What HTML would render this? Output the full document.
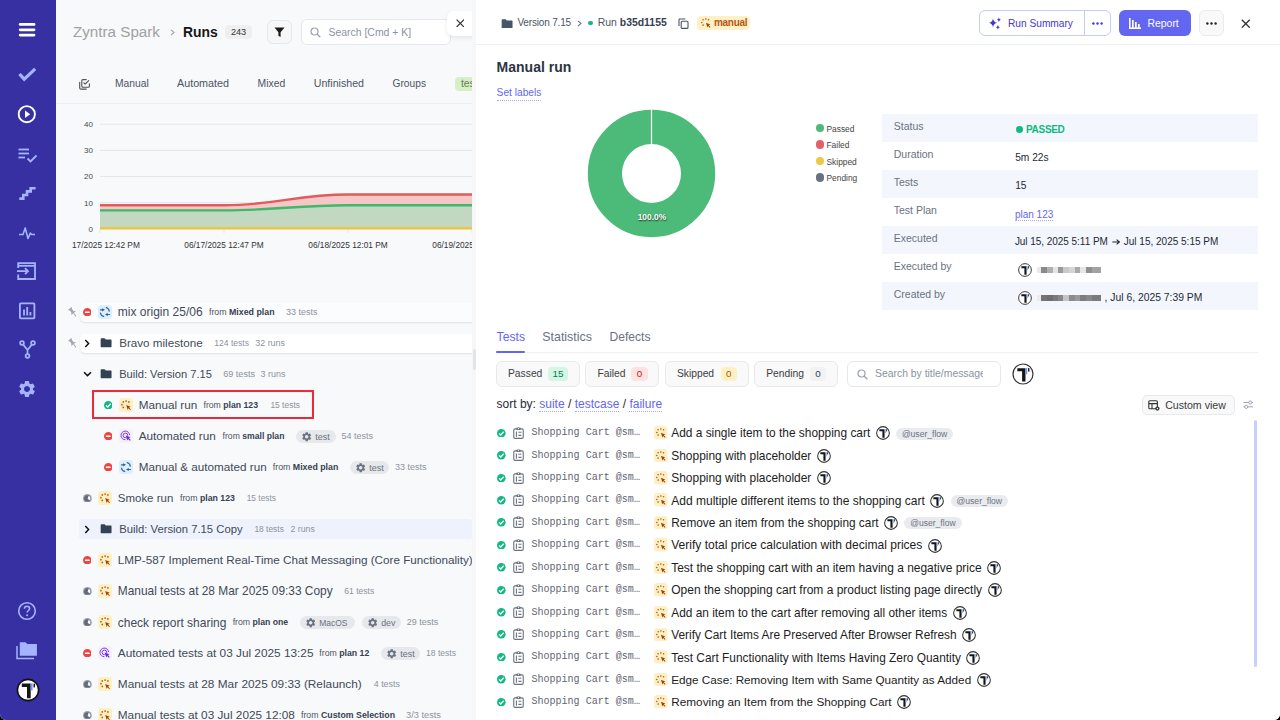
<!DOCTYPE html>
<html><head><meta charset="utf-8">
<style>
*{box-sizing:border-box;margin:0;padding:0}
html,body{width:1280px;height:720px;overflow:hidden;background:#000}
body{font-family:"Liberation Sans",sans-serif;position:relative}
.app{position:absolute;left:0;top:0;width:1280px;height:720px;border-radius:0 0 6px 6px;overflow:hidden;background:#f8f9fb}
.abs{position:absolute}
.sb{position:absolute;left:0;top:0;width:56px;height:720px;background:#3730a3}
.sb svg{position:absolute}
.left{position:absolute;left:56px;top:0;width:416px;height:720px;background:#f8f9fb;overflow:hidden}
.right{position:absolute;left:476px;top:0;width:804px;height:720px;background:#fff}
.strip{position:absolute;left:472px;top:0;width:4px;height:720px;background:#f7f7f8}
.t{position:absolute;white-space:nowrap;line-height:1}
.t b{font-weight:700}
.lk{color:#6366f1;border-bottom:1px dotted #a5a8f5}
.ttl .av{display:inline-block;width:14px;height:14px;margin-left:5.4px;vertical-align:-3px}
.tag{display:inline-block;margin-left:6px;height:12.5px;line-height:12.5px;padding:0 5px;border-radius:6px;background:#eceef2;color:#6b7280;font-size:8.6px;vertical-align:0px}
</style></head><body><div class="app">
<!-- SIDEBAR -->
<div class="sb">
  <svg style="left:18px;top:22px" width="18" height="16" viewBox="0 0 18 16"><g stroke="#fff" stroke-width="2.8" stroke-linecap="round"><line x1="2.2" y1="2.4" x2="16" y2="2.4"/><line x1="2.2" y1="7.8" x2="16" y2="7.8"/><line x1="2.2" y1="13.1" x2="16" y2="13.1"/></g></svg>
  <svg style="left:18px;top:67px" width="18" height="17" viewBox="0 0 18 17"><path d="M2.5 8.2 L6.2 12.2 L16 3" fill="none" stroke="#a5b4fc" stroke-width="3.2" stroke-linecap="square"/></svg>
  <svg style="left:17px;top:104px" width="20" height="20" viewBox="0 0 20 20"><circle cx="9.8" cy="10.2" r="8.1" fill="none" stroke="#fff" stroke-width="1.9"/><path d="M8 6.6 L13.2 10.2 L8 13.9Z" fill="#fff"/></svg>
  <svg style="left:17px;top:147px" width="21" height="17" viewBox="0 0 21 17"><g stroke="#a5b4fc" stroke-width="1.8" fill="none"><line x1="1.5" y1="2.5" x2="12" y2="2.5"/><line x1="1.5" y1="6.5" x2="12" y2="6.5"/><line x1="1.5" y1="10.5" x2="8" y2="10.5"/><path d="M10.5 11.5 L13.5 14.5 L19.5 8.5"/></g></svg>
  <svg style="left:18px;top:186px" width="19" height="15" viewBox="0 0 19 15"><path d="M1.3 12.6 H5.3 V9 H9 V5.4 H12.7 V2.2 H17.6" fill="none" stroke="#a5b4fc" stroke-width="2.6" stroke-linejoin="miter"/></svg>
  <svg style="left:18px;top:226px" width="18" height="14" viewBox="0 0 18 14"><path d="M1 8.5 H5 L7.2 2 L10 12.5 L12.3 7 L13.5 8.5 H17" fill="none" stroke="#a5b4fc" stroke-width="1.6" stroke-linejoin="round"/></svg>
  <svg style="left:16px;top:261px" width="21" height="20" viewBox="0 0 21 20"><g fill="none" stroke="#a5b4fc" stroke-width="1.8"><path d="M2.2 7 V2.2 H19 V18 H2.2 V13.5"/><line x1="2.2" y1="4.8" x2="19" y2="4.8"/><path d="M1 10.2 H12 M9 7.2 L12 10.2 L9 13.2"/></g></svg>
  <svg style="left:18px;top:301px" width="18" height="19" viewBox="0 0 18 19"><g fill="none" stroke="#a5b4fc" stroke-width="1.8"><rect x="1.9" y="2.3" width="14.5" height="15" rx="0.8"/></g><g stroke="#a5b4fc" stroke-width="1.8"><line x1="6" y1="8.5" x2="6" y2="14.5"/><line x1="9.2" y1="6" x2="9.2" y2="14.5"/><line x1="12.4" y1="11" x2="12.4" y2="14.5"/></g></svg>
  <svg style="left:19px;top:340px" width="17" height="19" viewBox="0 0 17 19"><g fill="none" stroke="#a5b4fc" stroke-width="1.7"><circle cx="3" cy="3" r="1.9"/><circle cx="14" cy="3" r="1.9"/><circle cx="8.5" cy="16" r="1.9"/><path d="M4.2 4.6 L8.5 10 L12.8 4.6 M8.5 10 V14"/></g></svg>
  <svg style="left:17px;top:379px" width="20" height="20" viewBox="0 0 24 24"><path fill="#a5b4fc" d="M19.14 12.94c.04-.3.06-.61.06-.94 0-.32-.02-.64-.07-.94l2.03-1.58a.49.49 0 0 0 .12-.61l-1.92-3.32a.488.488 0 0 0-.59-.22l-2.39.96c-.5-.38-1.03-.7-1.62-.94l-.36-2.54a.484.484 0 0 0-.48-.41h-3.84c-.24 0-.43.17-.47.41l-.36 2.54c-.59.24-1.13.57-1.62.94l-2.39-.96c-.22-.08-.47 0-.59.22L2.74 8.87c-.12.21-.08.47.12.61l2.03 1.58c-.05.3-.09.63-.09.94s.02.64.07.94l-2.03 1.58a.49.49 0 0 0-.12.61l1.92 3.32c.12.22.37.29.59.22l2.39-.96c.5.38 1.03.7 1.62.94l.36 2.54c.05.24.24.41.48.41h3.84c.24 0 .44-.17.47-.41l.36-2.54c.59-.24 1.13-.56 1.62-.94l2.39.96c.22.08.47 0 .59-.22l1.92-3.32c.12-.22.07-.47-.12-.61l-2.01-1.58zM12 15.6c-1.98 0-3.6-1.62-3.6-3.6s1.62-3.6 3.6-3.6 3.6 1.62 3.6 3.6-1.62 3.6-3.6 3.6z"/></svg>
  <svg style="left:17px;top:601px" width="20" height="20" viewBox="0 0 20 20"><circle cx="10" cy="10" r="8.3" fill="none" stroke="#a5b4fc" stroke-width="1.6"/><path d="M7.4 7.8 C7.4 6.1 8.6 5.2 10 5.2 C11.5 5.2 12.6 6.2 12.6 7.6 C12.6 9.4 10.2 9.6 10.2 11.6" fill="none" stroke="#a5b4fc" stroke-width="1.6"/><circle cx="10.1" cy="14.3" r="1" fill="#a5b4fc"/></svg>
  <svg style="left:15px;top:640px" width="24" height="21" viewBox="0 0 24 21"><path d="M2 6 V18.5 H19" fill="none" stroke="#a5b4fc" stroke-width="1.5"/><path d="M4.8 2.2 H10.5 L12.3 4 H21.9 V15.8 H4.8Z" fill="#a5b4fc"/></svg>
  <svg style="left:16px;top:678px" width="24" height="24" viewBox="0 0 24 24"><circle cx="12" cy="12" r="10.6" fill="#fff" stroke="#111" stroke-width="1.6"/><path d="M5.8 5.6 H14.7 V20.2 H11 V8.9 H5.8Z" fill="#161616"/><rect x="17.5" y="5.6" width="1.5" height="3.8" fill="#161616"/><rect x="14.7" y="5.4" width="1.9" height="7" fill="#6d9cf0"/></svg>
</div>


<div class="left">
<div class="t" style="left:17.00px;top:24px;font-size:15.2px;color:#a1a1a1;font-weight:400;font-family:'Liberation Sans';">Zyntra Spark</div>
<svg class="abs" style="left:114.00px;top:28.50px;" width="5" height="7" viewBox="0 0 5 7"><path d="M1 0.8 L4 3.5 L1 6.2" fill="none" stroke="#9ca3af" stroke-width="1.1"/></svg>
<div class="t" style="left:127.00px;top:26px;font-size:13.9px;color:#161616;font-weight:700;font-family:'Liberation Sans';">Runs</div>
<div class="abs" style="left:169.00px;top:25.00px;width:27.00px;height:13.50px;background:#efefef;border-radius:4px"></div>
<div class="t" style="left:174.90px;top:28px;font-size:9.17px;color:#333;font-weight:400;font-family:'Liberation Sans';">243</div>
<div class="abs" style="left:210.50px;top:19.50px;width:25.00px;height:24.50px;background:#f7f7f8;border:1px solid #e6e7ea;border-radius:6px"></div>
<svg class="abs" style="left:217.50px;top:26.50px;" width="11" height="11" viewBox="0 0 11 11"><path d="M0.5 0.6 H10.5 L6.6 5.2 V10 L4.4 8.7 V5.2 Z" fill="#1c1c1c"/></svg>
<div class="abs" style="left:244.50px;top:19.00px;width:150.00px;height:25.50px;background:#fff;border:1px solid #e6e7ea;border-radius:6px"></div>
<svg class="abs" style="left:254.00px;top:26.50px;" width="11" height="11" viewBox="0 0 11 11"><circle cx="4.5" cy="4.5" r="3.5" fill="none" stroke="#9ca3af" stroke-width="1.2"/><path d="M7 7 L10.3 10.3" stroke="#9ca3af" stroke-width="1.3"/></svg>
<div class="t" style="left:272.50px;top:28px;font-size:10.45px;color:#8b93a0;font-weight:400;font-family:'Liberation Sans';">Search [Cmd + K]</div>
<svg class="abs" style="left:22.50px;top:78.50px;" width="11" height="11" viewBox="0 0 11 11"><g fill="none" stroke="#505257" stroke-width="1.1" stroke-linecap="round" stroke-linejoin="round"><path d="M7.2 0.6 H3.8 Q2.8 0.6 2.8 1.6 V7.2 Q2.8 8.2 3.8 8.2 H9.4 Q10.4 8.2 10.4 7.2 V4.8"/><path d="M4.8 3.8 L6.2 5 L9.7 1.7"/><path d="M0.7 3.2 V9 Q0.7 10.1 1.8 10.1 H7.3"/></g></svg>
<div class="t" style="left:59.00px;top:79px;font-size:10.3px;color:#4b5563;font-weight:400;font-family:'Liberation Sans';">Manual</div>
<div class="t" style="left:121.00px;top:78px;font-size:10.75px;color:#4b5563;font-weight:400;font-family:'Liberation Sans';">Automated</div>
<div class="t" style="left:201.50px;top:79px;font-size:10.4px;color:#4b5563;font-weight:400;font-family:'Liberation Sans';">Mixed</div>
<div class="t" style="left:257.80px;top:78px;font-size:10.62px;color:#4b5563;font-weight:400;font-family:'Liberation Sans';">Unfinished</div>
<div class="t" style="left:336.50px;top:79px;font-size:10.22px;color:#4b5563;font-weight:400;font-family:'Liberation Sans';">Groups</div>
<div class="abs" style="left:398.70px;top:76.60px;width:35.30px;height:14.40px;background:#d8efc4;border-radius:4px"></div>
<div class="t" style="left:405.00px;top:79px;font-size:10.3px;color:#6b7a5f;font-weight:400;font-family:'Liberation Sans';">test</div>
<div class="abs" style="left:0.00px;top:103.00px;width:416.00px;height:1.00px;background:#eceef1"></div>
<svg class="abs" style="left:0;top:0" width="420" height="260" viewBox="56 0 420 260"><line x1="100" y1="124.2" x2="480" y2="124.2" stroke="#e3e5e8" stroke-width="1"/><line x1="100" y1="150.4" x2="480" y2="150.4" stroke="#e3e5e8" stroke-width="1"/><line x1="100" y1="176.5" x2="480" y2="176.5" stroke="#e3e5e8" stroke-width="1"/><line x1="100" y1="202.6" x2="480" y2="202.6" stroke="#e3e5e8" stroke-width="1"/><line x1="100" y1="228.7" x2="480" y2="228.7" stroke="#e3e5e8" stroke-width="1"/><line x1="100" y1="228.7" x2="100" y2="233" stroke="#e3e5e8" stroke-width="1"/><line x1="224" y1="228.7" x2="224" y2="233" stroke="#e3e5e8" stroke-width="1"/><line x1="348" y1="228.7" x2="348" y2="233" stroke="#e3e5e8" stroke-width="1"/><line x1="472" y1="228.7" x2="472" y2="233" stroke="#e3e5e8" stroke-width="1"/><path d="M100 205.32 L224 205.32 C274 205.32 298 194.48 348 194.48 L480 194.48 L480 204.93 L348 205.19 C298 205.19 274 210.41 224 210.41 L100 210.41 Z" fill="#f5c7c7"/><path d="M100 210.41 L224 210.41 C274 210.41 298 205.19 348 205.19 L480 205.19 L480 228.7 L100 228.7 Z" fill="#c3d8c0"/><path d="M100 205.32 L224 205.32 C274 205.32 298 194.48 348 194.48 L480 194.48" fill="none" stroke="#e05c5c" stroke-width="2.4"/><path d="M100 210.41 L224 210.41 C274 210.41 298 205.19 348 205.19 L480 205.19" fill="none" stroke="#3fb86a" stroke-width="2.4"/><line x1="100" y1="228.3" x2="480" y2="228.3" stroke="#ecc542" stroke-width="2.4"/></svg>
<div class="t" style="left:28.10px;top:121px;font-size:8px;color:#4a4a4a;font-weight:400;font-family:'Liberation Sans';">40</div>
<div class="t" style="left:28.10px;top:147px;font-size:8px;color:#4a4a4a;font-weight:400;font-family:'Liberation Sans';">30</div>
<div class="t" style="left:28.10px;top:173px;font-size:8px;color:#4a4a4a;font-weight:400;font-family:'Liberation Sans';">20</div>
<div class="t" style="left:28.10px;top:200px;font-size:8px;color:#4a4a4a;font-weight:400;font-family:'Liberation Sans';">10</div>
<div class="t" style="left:32.55px;top:226px;font-size:8px;color:#4a4a4a;font-weight:400;font-family:'Liberation Sans';">0</div>
<div class="t" style="left:-50.099999999999994px;width:200px;text-align:center;top:241px;font-size:8.3px;color:#333">17/2025 12:42 PM</div>
<div class="t" style="left:68px;width:200px;text-align:center;top:241px;font-size:8.3px;color:#333">06/17/2025 12:47 PM</div>
<div class="t" style="left:192px;width:200px;text-align:center;top:241px;font-size:8.3px;color:#333">06/18/2025 12:01 PM</div>
<div class="t" style="left:316px;width:200px;text-align:center;top:241px;font-size:8.3px;color:#333">06/19/2025 12:01 PM</div>
<div class="abs" style="left:24.00px;top:302.50px;width:420.00px;height:19.50px;background:#fbfcfd;border-radius:5px;box-shadow:0 1px 2px rgba(0,0,0,0.10)"></div>
<div class="abs" style="left:24.00px;top:333.50px;width:420.00px;height:19.50px;background:#fff;border-radius:5px;box-shadow:0 1px 2px rgba(0,0,0,0.10)"></div>
<svg class="abs" style="left:12.30px;top:306.80px;" width="10" height="11" viewBox="0 0 10 11"><g transform="rotate(-38 5 5.5)" fill="#a0a7b1"><rect x="2.9" y="0.3" width="4.2" height="1.3" rx="0.4"/><rect x="3.7" y="1.4" width="2.6" height="3.6"/><path d="M1.9 6.4 L3.6 4.8 H6.4 L8.1 6.4 Z"/><rect x="4.55" y="6.3" width="0.9" height="4.2"/></g></svg>
<svg class="abs" style="left:12.30px;top:337.80px;" width="10" height="11" viewBox="0 0 10 11"><g transform="rotate(-38 5 5.5)" fill="#a0a7b1"><rect x="2.9" y="0.3" width="4.2" height="1.3" rx="0.4"/><rect x="3.7" y="1.4" width="2.6" height="3.6"/><path d="M1.9 6.4 L3.6 4.8 H6.4 L8.1 6.4 Z"/><rect x="4.55" y="6.3" width="0.9" height="4.2"/></g></svg>
<svg class="abs" style="left:26.90px;top:307.70px;" width="8.6" height="8.6" viewBox="0 0 8.6 8.6"><circle cx="4.3" cy="4.3" r="4.3" fill="#ef4444"/><rect x="1.9" y="3.55" width="4.8" height="1.5" rx="0.5" fill="#fff"/></svg><svg class="abs" style="left:42.20px;top:305.00px;" width="14" height="14" viewBox="0 0 14 14"><rect width="14" height="14" rx="3.2" fill="#e1eefa"/><g fill="none" stroke="#2a6fae" stroke-width="1.15"><path d="M7.8 2.4 A4.9 4.9 0 0 1 11.4 6.6"/><path d="M6.2 11.6 A4.9 4.9 0 0 1 2.3 7.6"/><path d="M1.9 4.8 H5 M12 9.5 H9"/></g><g fill="#1f64a3"><path d="M7 4.8 L4.1 3.2 L4.1 6.4 Z"/><path d="M6.9 9.5 L9.8 7.9 L9.8 11.1 Z"/></g></svg><div class="t" style="left:61.80px;top:306px;font-size:12.03px;color:#414a58;font-weight:400;font-family:'Liberation Sans';">mix origin 25/06</div><div class="t" style="left:153.00px;top:308px;font-size:8.8px;color:#4b5563;font-weight:400;font-family:'Liberation Sans';">from <b style="color:#374151">Mixed plan</b></div><div class="t" style="left:230.00px;top:308px;font-size:9.02px;color:#8d939d;font-weight:400;font-family:'Liberation Sans';">33 tests</div>
<svg class="abs" style="left:27.80px;top:338.50px;" width="6" height="9" viewBox="0 0 6 9"><path d="M1.3 1 L4.6 4.5 L1.3 8" fill="none" stroke="#111" stroke-width="1.5"/></svg><svg class="abs" style="left:44.30px;top:338.20px;" width="12" height="9.5" viewBox="0 0 12 9.6"><path d="M0.6 1.2 Q0.6 0.3 1.5 0.3 H4.6 L5.8 1.6 H11 Q11.6 1.6 11.6 2.3 V8.6 Q11.6 9.3 11 9.3 H1.2 Q0.6 9.3 0.6 8.6 Z" fill="#334155"/></svg><div class="t" style="left:63.20px;top:337px;font-size:11.65px;color:#414a58;font-weight:400;font-family:'Liberation Sans';">Bravo milestone</div><div class="t" style="left:158.30px;top:339px;font-size:8.55px;color:#8d939d;font-weight:400;font-family:'Liberation Sans';">124 tests</div><div class="t" style="left:199.30px;top:339px;font-size:8.9px;color:#8d939d;font-weight:400;font-family:'Liberation Sans';">32 runs</div>
<svg class="abs" style="left:26.50px;top:371.20px;" width="9" height="6" viewBox="0 0 9 6"><path d="M1 1.3 L4.5 4.6 L8 1.3" fill="none" stroke="#111" stroke-width="1.5"/></svg><svg class="abs" style="left:44.30px;top:369.20px;" width="12" height="9.5" viewBox="0 0 12 9.6"><path d="M0.6 1.2 Q0.6 0.3 1.5 0.3 H4.6 L5.8 1.6 H11 Q11.6 1.6 11.6 2.3 V8.6 Q11.6 9.3 11 9.3 H1.2 Q0.6 9.3 0.6 8.6 Z" fill="#334155"/></svg><div class="t" style="left:63.20px;top:369px;font-size:11.13px;color:#414a58;font-weight:400;font-family:'Liberation Sans';">Build: Version 7.15</div><div class="t" style="left:167.20px;top:370px;font-size:9.08px;color:#8d939d;font-weight:400;font-family:'Liberation Sans';">69 tests</div><div class="t" style="left:204.60px;top:370px;font-size:8.96px;color:#8d939d;font-weight:400;font-family:'Liberation Sans';">3 runs</div>
<div class="abs" style="left:36.20px;top:389.80px;width:221.40px;height:29.20px;border:2.6px solid #ee2a3c;background:#f9fafb"></div>
<div class="abs" style="left:39.00px;top:392.50px;width:216.00px;height:24.00px;background:#f8f9fa;box-shadow:0 0 3px rgba(0,0,0,0.08)"></div>
<svg class="abs" style="left:47.90px;top:400.70px;" width="8.6" height="8.6" viewBox="0 0 8.6 8.6"><circle cx="4.3" cy="4.3" r="4.3" fill="#10b981"/><path d="M2.0 4.3999999999999995 L3.6999999999999997 6.0 L6.699999999999999 2.8" fill="none" stroke="#fff" stroke-width="1.3"/></svg><svg class="abs" style="left:63.00px;top:398.00px;" width="14" height="14" viewBox="0 0 14 14"><rect width="14" height="14" rx="3.2" fill="#fdf0c4"/><g fill="#c2570c"><circle cx="4.3" cy="3.9" r="0.85"/><circle cx="7.1" cy="3.1" r="0.85"/><circle cx="9.9" cy="3.9" r="0.85"/><circle cx="2.9" cy="6.7" r="0.85"/><circle cx="4.3" cy="9.4" r="0.85"/></g><path d="M7.2 7.1 L11.7 8.8 L10.1 9.6 L11.9 11.4 L11.2 12.1 L9.4 10.3 L8.7 11.9 Z" fill="#a8400c"/></svg><div class="t" style="left:82.70px;top:399px;font-size:11.71px;color:#414a58;font-weight:400;font-family:'Liberation Sans';">Manual run</div><div class="t" style="left:147.50px;top:401px;font-size:8.68px;color:#4b5563;font-weight:400;font-family:'Liberation Sans';">from <b style="color:#374151">plan 123</b></div><div class="t" style="left:214.40px;top:401px;font-size:8.45px;color:#8d939d;font-weight:400;font-family:'Liberation Sans';">15 tests</div>
<svg class="abs" style="left:47.90px;top:431.70px;" width="8.6" height="8.6" viewBox="0 0 8.6 8.6"><circle cx="4.3" cy="4.3" r="4.3" fill="#ef4444"/><rect x="1.9" y="3.55" width="4.8" height="1.5" rx="0.5" fill="#fff"/></svg><svg class="abs" style="left:63.00px;top:429.00px;" width="14" height="14" viewBox="0 0 14 14"><rect width="14" height="14" rx="3.2" fill="#f4f0fe"/><g fill="none" stroke="#7c3aed" stroke-width="1"><path d="M10.6 6.2 A4.3 4.3 0 1 0 6.4 10.7"/><path d="M8.7 6.8 A2.3 2.3 0 1 0 6.8 8.7"/></g><path d="M6.6 6.6 L11.6 8.3 L9.9 9.1 L11.7 10.9 L10.9 11.7 L9.1 9.9 L8.3 11.6 Z" fill="#6d28d9"/></svg><div class="t" style="left:82.70px;top:430px;font-size:11.78px;color:#414a58;font-weight:400;font-family:'Liberation Sans';">Automated run</div><div class="t" style="left:166.60px;top:432px;font-size:8.63px;color:#4b5563;font-weight:400;font-family:'Liberation Sans';">from <b style="color:#374151">small plan</b></div><div class="abs" style="left:240.00px;top:430.12px;width:39.50px;height:12.75px;background:#e6e8ec;border-radius:7px"></div><svg class="abs" style="left:245.20px;top:430.80px;" width="11.4" height="11.4" viewBox="0 0 24 24"><path fill="#6b7280" d="M19.14 12.94c.04-.3.06-.61.06-.94 0-.32-.02-.64-.07-.94l2.03-1.58a.49.49 0 0 0 .12-.61l-1.92-3.32a.488.488 0 0 0-.59-.22l-2.39.96c-.5-.38-1.03-.7-1.62-.94l-.36-2.54a.484.484 0 0 0-.48-.41h-3.84c-.24 0-.43.17-.47.41l-.36 2.54c-.59.24-1.13.57-1.62.94l-2.39-.96c-.22-.08-.47 0-.59.22L2.74 8.87c-.12.21-.08.47.12.61l2.03 1.58c-.05.3-.09.63-.09.94s.02.64.07.94l-2.03 1.58a.49.49 0 0 0-.12.61l1.92 3.32c.12.22.37.29.59.22l2.39-.96c.5.38 1.03.7 1.62.94l.36 2.54c.05.24.24.41.48.41h3.84c.24 0 .44-.17.47-.41l.36-2.54c.59-.24 1.13-.56 1.62-.94l2.39.96c.22.08.47 0 .59-.22l1.92-3.32c.12-.22.07-.47-.12-.61l-2.01-1.58zM12 15.6c-1.98 0-3.6-1.62-3.6-3.6s1.62-3.6 3.6-3.6 3.6 1.62 3.6 3.6-1.62 3.6-3.6 3.6z"/></svg><div class="t" style="left:259.20px;top:433px;font-size:9.0px;color:#6b7280;font-weight:400;font-family:'Liberation Sans';">test</div><div class="t" style="left:285.60px;top:432px;font-size:8.97px;color:#8d939d;font-weight:400;font-family:'Liberation Sans';">54 tests</div>
<svg class="abs" style="left:47.90px;top:462.70px;" width="8.6" height="8.6" viewBox="0 0 8.6 8.6"><circle cx="4.3" cy="4.3" r="4.3" fill="#ef4444"/><rect x="1.9" y="3.55" width="4.8" height="1.5" rx="0.5" fill="#fff"/></svg><svg class="abs" style="left:63.00px;top:460.00px;" width="14" height="14" viewBox="0 0 14 14"><rect width="14" height="14" rx="3.2" fill="#e1eefa"/><g fill="none" stroke="#2a6fae" stroke-width="1.15"><path d="M7.8 2.4 A4.9 4.9 0 0 1 11.4 6.6"/><path d="M6.2 11.6 A4.9 4.9 0 0 1 2.3 7.6"/><path d="M1.9 4.8 H5 M12 9.5 H9"/></g><g fill="#1f64a3"><path d="M7 4.8 L4.1 3.2 L4.1 6.4 Z"/><path d="M6.9 9.5 L9.8 7.9 L9.8 11.1 Z"/></g></svg><div class="t" style="left:82.70px;top:461px;font-size:11.69px;color:#414a58;font-weight:400;font-family:'Liberation Sans';">Manual &amp; automated run</div><div class="t" style="left:216.80px;top:463px;font-size:8.8px;color:#4b5563;font-weight:400;font-family:'Liberation Sans';">from <b style="color:#374151">Mixed plan</b></div><div class="abs" style="left:294.00px;top:461.12px;width:38.50px;height:12.75px;background:#e6e8ec;border-radius:7px"></div><svg class="abs" style="left:299.20px;top:461.80px;" width="11.4" height="11.4" viewBox="0 0 24 24"><path fill="#6b7280" d="M19.14 12.94c.04-.3.06-.61.06-.94 0-.32-.02-.64-.07-.94l2.03-1.58a.49.49 0 0 0 .12-.61l-1.92-3.32a.488.488 0 0 0-.59-.22l-2.39.96c-.5-.38-1.03-.7-1.62-.94l-.36-2.54a.484.484 0 0 0-.48-.41h-3.84c-.24 0-.43.17-.47.41l-.36 2.54c-.59.24-1.13.57-1.62.94l-2.39-.96c-.22-.08-.47 0-.59.22L2.74 8.87c-.12.21-.08.47.12.61l2.03 1.58c-.05.3-.09.63-.09.94s.02.64.07.94l-2.03 1.58a.49.49 0 0 0-.12.61l1.92 3.32c.12.22.37.29.59.22l2.39-.96c.5.38 1.03.7 1.62.94l.36 2.54c.05.24.24.41.48.41h3.84c.24 0 .44-.17.47-.41l.36-2.54c.59-.24 1.13-.56 1.62-.94l2.39.96c.22.08.47 0 .59-.22l1.92-3.32c.12-.22.07-.47-.12-.61l-2.01-1.58zM12 15.6c-1.98 0-3.6-1.62-3.6-3.6s1.62-3.6 3.6-3.6 3.6 1.62 3.6 3.6-1.62 3.6-3.6 3.6z"/></svg><div class="t" style="left:313.20px;top:464px;font-size:9.0px;color:#6b7280;font-weight:400;font-family:'Liberation Sans';">test</div><div class="t" style="left:339.00px;top:463px;font-size:9.02px;color:#8d939d;font-weight:400;font-family:'Liberation Sans';">33 tests</div>
<svg class="abs" style="left:26.80px;top:493.60px;" width="8.8" height="8.8" viewBox="0 0 8.8 8.8"><circle cx="4.4" cy="4.4" r="4.4" fill="#9aa0a9"/><circle cx="4.4" cy="4.4" r="3.2" fill="#646b78"/><path d="M4.6000000000000005 4.800000000000001 L5.67 1.68 A3 3 0 0 1 6.70 6.33 Z" fill="#fff"/></svg><svg class="abs" style="left:42.20px;top:491.00px;" width="14" height="14" viewBox="0 0 14 14"><rect width="14" height="14" rx="3.2" fill="#fdf0c4"/><g fill="#c2570c"><circle cx="4.3" cy="3.9" r="0.85"/><circle cx="7.1" cy="3.1" r="0.85"/><circle cx="9.9" cy="3.9" r="0.85"/><circle cx="2.9" cy="6.7" r="0.85"/><circle cx="4.3" cy="9.4" r="0.85"/></g><path d="M7.2 7.1 L11.7 8.8 L10.1 9.6 L11.9 11.4 L11.2 12.1 L9.4 10.3 L8.7 11.9 Z" fill="#a8400c"/></svg><div class="t" style="left:61.80px;top:493px;font-size:11.48px;color:#414a58;font-weight:400;font-family:'Liberation Sans';">Smoke run</div><div class="t" style="left:124.00px;top:494px;font-size:8.76px;color:#4b5563;font-weight:400;font-family:'Liberation Sans';">from <b style="color:#374151">plan 123</b></div><div class="t" style="left:190.70px;top:494px;font-size:8.37px;color:#8d939d;font-weight:400;font-family:'Liberation Sans';">15 tests</div>
<div class="abs" style="left:23.30px;top:519.40px;width:392.70px;height:19.20px;background:#eef2fd;border-radius:3px"></div>
<svg class="abs" style="left:27.80px;top:524.50px;" width="6" height="9" viewBox="0 0 6 9"><path d="M1.3 1 L4.6 4.5 L1.3 8" fill="none" stroke="#111" stroke-width="1.5"/></svg><svg class="abs" style="left:44.30px;top:524.20px;" width="12" height="9.5" viewBox="0 0 12 9.6"><path d="M0.6 1.2 Q0.6 0.3 1.5 0.3 H4.6 L5.8 1.6 H11 Q11.6 1.6 11.6 2.3 V8.6 Q11.6 9.3 11 9.3 H1.2 Q0.6 9.3 0.6 8.6 Z" fill="#334155"/></svg><div class="t" style="left:63.20px;top:524px;font-size:11.28px;color:#414a58;font-weight:400;font-family:'Liberation Sans';">Build: Version 7.15 Copy</div><div class="t" style="left:198.40px;top:525px;font-size:8.42px;color:#8d939d;font-weight:400;font-family:'Liberation Sans';">18 tests</div><div class="t" style="left:234.60px;top:525px;font-size:8.71px;color:#8d939d;font-weight:400;font-family:'Liberation Sans';">2 runs</div>
<svg class="abs" style="left:26.90px;top:555.70px;" width="8.6" height="8.6" viewBox="0 0 8.6 8.6"><circle cx="4.3" cy="4.3" r="4.3" fill="#ef4444"/><rect x="1.9" y="3.55" width="4.8" height="1.5" rx="0.5" fill="#fff"/></svg><svg class="abs" style="left:42.20px;top:553.00px;" width="14" height="14" viewBox="0 0 14 14"><rect width="14" height="14" rx="3.2" fill="#fdf0c4"/><g fill="#c2570c"><circle cx="4.3" cy="3.9" r="0.85"/><circle cx="7.1" cy="3.1" r="0.85"/><circle cx="9.9" cy="3.9" r="0.85"/><circle cx="2.9" cy="6.7" r="0.85"/><circle cx="4.3" cy="9.4" r="0.85"/></g><path d="M7.2 7.1 L11.7 8.8 L10.1 9.6 L11.9 11.4 L11.2 12.1 L9.4 10.3 L8.7 11.9 Z" fill="#a8400c"/></svg><div class="t" style="left:61.80px;top:554px;font-size:11.7px;color:#414a58;font-weight:400;font-family:'Liberation Sans';">LMP-587 Implement Real-Time Chat Messaging (Core Functionality)</div>
<svg class="abs" style="left:26.80px;top:586.60px;" width="8.8" height="8.8" viewBox="0 0 8.8 8.8"><circle cx="4.4" cy="4.4" r="4.4" fill="#9aa0a9"/><circle cx="4.4" cy="4.4" r="3.2" fill="#646b78"/><path d="M4.6000000000000005 4.800000000000001 L5.67 1.68 A3 3 0 0 1 6.70 6.33 Z" fill="#fff"/></svg><svg class="abs" style="left:42.20px;top:584.00px;" width="14" height="14" viewBox="0 0 14 14"><rect width="14" height="14" rx="3.2" fill="#fdf0c4"/><g fill="#c2570c"><circle cx="4.3" cy="3.9" r="0.85"/><circle cx="7.1" cy="3.1" r="0.85"/><circle cx="9.9" cy="3.9" r="0.85"/><circle cx="2.9" cy="6.7" r="0.85"/><circle cx="4.3" cy="9.4" r="0.85"/></g><path d="M7.2 7.1 L11.7 8.8 L10.1 9.6 L11.9 11.4 L11.2 12.1 L9.4 10.3 L8.7 11.9 Z" fill="#a8400c"/></svg><div class="t" style="left:61.80px;top:586px;font-size:11.9px;color:#414a58;font-weight:400;font-family:'Liberation Sans';">Manual tests at 28 Mar 2025 09:33 Copy</div><div class="t" style="left:288.30px;top:587px;font-size:8.57px;color:#8d939d;font-weight:400;font-family:'Liberation Sans';">61 tests</div>
<svg class="abs" style="left:26.80px;top:617.60px;" width="8.8" height="8.8" viewBox="0 0 8.8 8.8"><circle cx="4.4" cy="4.4" r="4.4" fill="#9aa0a9"/><circle cx="4.4" cy="4.4" r="3.2" fill="#646b78"/><path d="M4.6000000000000005 4.800000000000001 L5.67 1.68 A3 3 0 0 1 6.70 6.33 Z" fill="#fff"/></svg><svg class="abs" style="left:42.20px;top:615.00px;" width="14" height="14" viewBox="0 0 14 14"><rect width="14" height="14" rx="3.2" fill="#fdf0c4"/><g fill="#c2570c"><circle cx="4.3" cy="3.9" r="0.85"/><circle cx="7.1" cy="3.1" r="0.85"/><circle cx="9.9" cy="3.9" r="0.85"/><circle cx="2.9" cy="6.7" r="0.85"/><circle cx="4.3" cy="9.4" r="0.85"/></g><path d="M7.2 7.1 L11.7 8.8 L10.1 9.6 L11.9 11.4 L11.2 12.1 L9.4 10.3 L8.7 11.9 Z" fill="#a8400c"/></svg><div class="t" style="left:61.80px;top:617px;font-size:11.99px;color:#414a58;font-weight:400;font-family:'Liberation Sans';">check report sharing</div><div class="t" style="left:176.70px;top:618px;font-size:8.7px;color:#4b5563;font-weight:400;font-family:'Liberation Sans';">from <b style="color:#374151">plan one</b></div><div class="abs" style="left:244.00px;top:616.12px;width:55.30px;height:12.75px;background:#e6e8ec;border-radius:7px"></div><svg class="abs" style="left:249.20px;top:616.80px;" width="11.4" height="11.4" viewBox="0 0 24 24"><path fill="#6b7280" d="M19.14 12.94c.04-.3.06-.61.06-.94 0-.32-.02-.64-.07-.94l2.03-1.58a.49.49 0 0 0 .12-.61l-1.92-3.32a.488.488 0 0 0-.59-.22l-2.39.96c-.5-.38-1.03-.7-1.62-.94l-.36-2.54a.484.484 0 0 0-.48-.41h-3.84c-.24 0-.43.17-.47.41l-.36 2.54c-.59.24-1.13.57-1.62.94l-2.39-.96c-.22-.08-.47 0-.59.22L2.74 8.87c-.12.21-.08.47.12.61l2.03 1.58c-.05.3-.09.63-.09.94s.02.64.07.94l-2.03 1.58a.49.49 0 0 0-.12.61l1.92 3.32c.12.22.37.29.59.22l2.39-.96c.5.38 1.03.7 1.62.94l.36 2.54c.05.24.24.41.48.41h3.84c.24 0 .44-.17.47-.41l.36-2.54c.59-.24 1.13-.56 1.62-.94l2.39.96c.22.08.47 0 .59-.22l1.92-3.32c.12-.22.07-.47-.12-.61l-2.01-1.58zM12 15.6c-1.98 0-3.6-1.62-3.6-3.6s1.62-3.6 3.6-3.6 3.6 1.62 3.6 3.6-1.62 3.6-3.6 3.6z"/></svg><div class="t" style="left:263.20px;top:619px;font-size:8.5px;color:#6b7280;font-weight:400;font-family:'Liberation Sans';">MacOS</div><div class="abs" style="left:306.00px;top:616.12px;width:39.00px;height:12.75px;background:#e6e8ec;border-radius:7px"></div><svg class="abs" style="left:311.20px;top:616.80px;" width="11.4" height="11.4" viewBox="0 0 24 24"><path fill="#6b7280" d="M19.14 12.94c.04-.3.06-.61.06-.94 0-.32-.02-.64-.07-.94l2.03-1.58a.49.49 0 0 0 .12-.61l-1.92-3.32a.488.488 0 0 0-.59-.22l-2.39.96c-.5-.38-1.03-.7-1.62-.94l-.36-2.54a.484.484 0 0 0-.48-.41h-3.84c-.24 0-.43.17-.47.41l-.36 2.54c-.59.24-1.13.57-1.62.94l-2.39-.96c-.22-.08-.47 0-.59.22L2.74 8.87c-.12.21-.08.47.12.61l2.03 1.58c-.05.3-.09.63-.09.94s.02.64.07.94l-2.03 1.58a.49.49 0 0 0-.12.61l1.92 3.32c.12.22.37.29.59.22l2.39-.96c.5.38 1.03.7 1.62.94l.36 2.54c.05.24.24.41.48.41h3.84c.24 0 .44-.17.47-.41l.36-2.54c.59-.24 1.13-.56 1.62-.94l2.39.96c.22.08.47 0 .59-.22l1.92-3.32c.12-.22.07-.47-.12-.61l-2.01-1.58zM12 15.6c-1.98 0-3.6-1.62-3.6-3.6s1.62-3.6 3.6-3.6 3.6 1.62 3.6 3.6-1.62 3.6-3.6 3.6z"/></svg><div class="t" style="left:325.20px;top:619px;font-size:8.75px;color:#6b7280;font-weight:400;font-family:'Liberation Sans';">dev</div><div class="t" style="left:350.70px;top:618px;font-size:9.02px;color:#8d939d;font-weight:400;font-family:'Liberation Sans';">29 tests</div>
<svg class="abs" style="left:26.90px;top:648.70px;" width="8.6" height="8.6" viewBox="0 0 8.6 8.6"><circle cx="4.3" cy="4.3" r="4.3" fill="#ef4444"/><rect x="1.9" y="3.55" width="4.8" height="1.5" rx="0.5" fill="#fff"/></svg><svg class="abs" style="left:42.20px;top:646.00px;" width="14" height="14" viewBox="0 0 14 14"><rect width="14" height="14" rx="3.2" fill="#f4f0fe"/><g fill="none" stroke="#7c3aed" stroke-width="1"><path d="M10.6 6.2 A4.3 4.3 0 1 0 6.4 10.7"/><path d="M8.7 6.8 A2.3 2.3 0 1 0 6.8 8.7"/></g><path d="M6.6 6.6 L11.6 8.3 L9.9 9.1 L11.7 10.9 L10.9 11.7 L9.1 9.9 L8.3 11.6 Z" fill="#6d28d9"/></svg><div class="t" style="left:61.80px;top:648px;font-size:11.82px;color:#414a58;font-weight:400;font-family:'Liberation Sans';">Automated tests at 03 Jul 2025 13:25</div><div class="t" style="left:263.30px;top:649px;font-size:8.74px;color:#4b5563;font-weight:400;font-family:'Liberation Sans';">from <b style="color:#374151">plan 12</b></div><div class="abs" style="left:325.00px;top:647.12px;width:39.30px;height:12.75px;background:#e6e8ec;border-radius:7px"></div><svg class="abs" style="left:330.20px;top:647.80px;" width="11.4" height="11.4" viewBox="0 0 24 24"><path fill="#6b7280" d="M19.14 12.94c.04-.3.06-.61.06-.94 0-.32-.02-.64-.07-.94l2.03-1.58a.49.49 0 0 0 .12-.61l-1.92-3.32a.488.488 0 0 0-.59-.22l-2.39.96c-.5-.38-1.03-.7-1.62-.94l-.36-2.54a.484.484 0 0 0-.48-.41h-3.84c-.24 0-.43.17-.47.41l-.36 2.54c-.59.24-1.13.57-1.62.94l-2.39-.96c-.22-.08-.47 0-.59.22L2.74 8.87c-.12.21-.08.47.12.61l2.03 1.58c-.05.3-.09.63-.09.94s.02.64.07.94l-2.03 1.58a.49.49 0 0 0-.12.61l1.92 3.32c.12.22.37.29.59.22l2.39-.96c.5.38 1.03.7 1.62.94l.36 2.54c.05.24.24.41.48.41h3.84c.24 0 .44-.17.47-.41l.36-2.54c.59-.24 1.13-.56 1.62-.94l2.39.96c.22.08.47 0 .59-.22l1.92-3.32c.12-.22.07-.47-.12-.61l-2.01-1.58zM12 15.6c-1.98 0-3.6-1.62-3.6-3.6s1.62-3.6 3.6-3.6 3.6 1.62 3.6 3.6-1.62 3.6-3.6 3.6z"/></svg><div class="t" style="left:344.20px;top:650px;font-size:9.0px;color:#6b7280;font-weight:400;font-family:'Liberation Sans';">test</div><div class="t" style="left:370.00px;top:649px;font-size:8.57px;color:#8d939d;font-weight:400;font-family:'Liberation Sans';">18 tests</div>
<svg class="abs" style="left:26.80px;top:679.60px;" width="8.8" height="8.8" viewBox="0 0 8.8 8.8"><circle cx="4.4" cy="4.4" r="4.4" fill="#9aa0a9"/><circle cx="4.4" cy="4.4" r="3.2" fill="#646b78"/><path d="M4.6000000000000005 4.800000000000001 L5.67 1.68 A3 3 0 0 1 6.70 6.33 Z" fill="#fff"/></svg><svg class="abs" style="left:42.20px;top:677.00px;" width="14" height="14" viewBox="0 0 14 14"><rect width="14" height="14" rx="3.2" fill="#fdf0c4"/><g fill="#c2570c"><circle cx="4.3" cy="3.9" r="0.85"/><circle cx="7.1" cy="3.1" r="0.85"/><circle cx="9.9" cy="3.9" r="0.85"/><circle cx="2.9" cy="6.7" r="0.85"/><circle cx="4.3" cy="9.4" r="0.85"/></g><path d="M7.2 7.1 L11.7 8.8 L10.1 9.6 L11.9 11.4 L11.2 12.1 L9.4 10.3 L8.7 11.9 Z" fill="#a8400c"/></svg><div class="t" style="left:61.80px;top:679px;font-size:11.83px;color:#414a58;font-weight:400;font-family:'Liberation Sans';">Manual tests at 28 Mar 2025 09:33 (Relaunch)</div><div class="t" style="left:317.70px;top:680px;font-size:8.93px;color:#8d939d;font-weight:400;font-family:'Liberation Sans';">4 tests</div>
<svg class="abs" style="left:26.80px;top:710.60px;" width="8.8" height="8.8" viewBox="0 0 8.8 8.8"><circle cx="4.4" cy="4.4" r="4.4" fill="#9aa0a9"/><circle cx="4.4" cy="4.4" r="3.2" fill="#646b78"/><path d="M4.6000000000000005 4.800000000000001 L5.67 1.68 A3 3 0 0 1 6.70 6.33 Z" fill="#fff"/></svg><svg class="abs" style="left:42.20px;top:708.00px;" width="14" height="14" viewBox="0 0 14 14"><rect width="14" height="14" rx="3.2" fill="#fdf0c4"/><g fill="#c2570c"><circle cx="4.3" cy="3.9" r="0.85"/><circle cx="7.1" cy="3.1" r="0.85"/><circle cx="9.9" cy="3.9" r="0.85"/><circle cx="2.9" cy="6.7" r="0.85"/><circle cx="4.3" cy="9.4" r="0.85"/></g><path d="M7.2 7.1 L11.7 8.8 L10.1 9.6 L11.9 11.4 L11.2 12.1 L9.4 10.3 L8.7 11.9 Z" fill="#a8400c"/></svg><div class="t" style="left:61.80px;top:710px;font-size:11.81px;color:#414a58;font-weight:400;font-family:'Liberation Sans';">Manual tests at 03 Jul 2025 12:08</div><div class="t" style="left:245.00px;top:711px;font-size:8.77px;color:#4b5563;font-weight:400;font-family:'Liberation Sans';">from <b style="color:#374151">Custom Selection</b></div><div class="t" style="left:350.00px;top:711px;font-size:9.26px;color:#8d939d;font-weight:400;font-family:'Liberation Sans';">3/3 tests</div>
<div class="abs" style="left:391.30px;top:10.90px;width:32.70px;height:24.70px;background:#fff;border-radius:7px;box-shadow:0 2px 5px rgba(0,0,0,0.08)"></div>
<svg class="abs" style="left:399.80px;top:18.80px;" width="8.6" height="8.6" viewBox="0 0 8.6 8.6"><path d="M0.6 0.6 L8 8 M8 0.6 L0.6 8" stroke="#333" stroke-width="1.2"/></svg>
</div>
<div class="strip"></div>
<div class="abs" style="left:472.8px;top:349px;width:2.9px;height:21.3px;background:#e3e4e8;border-radius:2px"></div>
<div class="right">
<svg class="abs" style="left:25.40px;top:18.80px;" width="12" height="9.5" viewBox="0 0 12 9.6"><path d="M0.6 1.2 Q0.6 0.3 1.5 0.3 H4.6 L5.8 1.6 H11 Q11.6 1.6 11.6 2.3 V8.6 Q11.6 9.3 11 9.3 H1.2 Q0.6 9.3 0.6 8.6 Z" fill="#475569"/></svg>
<div class="t" style="left:41.40px;top:18px;font-size:10px;color:#4b5563;font-weight:400;font-family:'Liberation Sans';letter-spacing:-0.166px;">Version 7.15</div>
<svg class="abs" style="left:100.50px;top:20.00px;" width="5" height="7" viewBox="0 0 5 7"><path d="M1 0.8 L4 3.5 L1 6.2" fill="none" stroke="#6b7280" stroke-width="1.1"/></svg>
<div class="abs" style="left:112.20px;top:20.60px;width:4.80px;height:4.80px;background:#10b981;border-radius:50%"></div>
<div class="t" style="left:121.70px;top:18px;font-size:10.45px;color:#4b5563;font-weight:400;font-family:'Liberation Sans';">Run <b style="color:#374151">b35d1155</b></div>
<svg class="abs" style="left:201.50px;top:17.50px;" width="11" height="11" viewBox="0 0 11 11"><g fill="none" stroke="#4b5563" stroke-width="1.1"><rect x="3.2" y="3.2" width="6.8" height="7.2" rx="1"/><path d="M1 8 V1.8 Q1 1 1.8 1 H7.3"/></g></svg>
<div class="abs" style="left:220.80px;top:16.00px;width:53.60px;height:13.70px;background:#fef1c7;border-radius:4px"></div>
<svg class="abs" style="left:222.50px;top:16.20px;" width="13.5" height="13.5" viewBox="0 0 14 14"><g fill="#c2570c"><circle cx="4.3" cy="3.9" r="0.85"/><circle cx="7.1" cy="3.1" r="0.85"/><circle cx="9.9" cy="3.9" r="0.85"/><circle cx="2.9" cy="6.7" r="0.85"/><circle cx="4.3" cy="9.4" r="0.85"/></g><path d="M7.2 7.1 L11.7 8.8 L10.1 9.6 L11.9 11.4 L11.2 12.1 L9.4 10.3 L8.7 11.9 Z" fill="#a8400c"/></svg>
<div class="t" style="left:238.00px;top:18px;font-size:10px;color:#b8560f;font-weight:700;font-family:'Liberation Sans';letter-spacing:-0.302px;">manual</div>
<div class="abs" style="left:-1.00px;top:44.00px;width:805.00px;height:1.00px;background:#eef0f3"></div>
<div class="abs" style="left:503.40px;top:10.25px;width:131.20px;height:25.35px;border:1px solid #c7cbfa;border-radius:6px;background:#fff"></div>
<div class="abs" style="left:608.00px;top:10.50px;width:1.00px;height:25.00px;background:#c7cbfa"></div>
<svg class="abs" style="left:511.60px;top:15.50px;" width="14" height="14" viewBox="0 0 14 14"><path d="M5 2.4 Q5.6 6.2 9.3 6.8 Q5.6 7.4 5 11.2 Q4.4 7.4 0.7 6.8 Q4.4 6.2 5 2.4Z M10.9 1.4 Q11.15 3.45 12.9 3.7 Q11.15 3.95 10.9 6 Q10.65 3.95 8.9 3.7 Q10.65 3.45 10.9 1.4Z M9.9 9 Q10.15 10.95 11.9 11.2 Q10.15 11.45 9.9 13.4 Q9.65 11.45 7.9 11.2 Q9.65 10.95 9.9 9Z" fill="#4338ca"/></svg>
<div class="t" style="left:532.00px;top:19px;font-size:10.16px;color:#4338ca;font-weight:400;font-family:'Liberation Sans';">Run Summary</div>
<svg class="abs" style="left:616.00px;top:21.50px;" width="11" height="3" viewBox="0 0 11 3"><circle cx="1.4" cy="1.5" r="1.2" fill="#4338ca"/><circle cx="5.5" cy="1.5" r="1.2" fill="#4338ca"/><circle cx="9.6" cy="1.5" r="1.2" fill="#4338ca"/></svg>
<div class="abs" style="left:642.50px;top:10.25px;width:72.10px;height:25.35px;background:#6366f1;border-radius:6px"></div>
<svg class="abs" style="left:652.50px;top:17.50px;" width="12" height="11" viewBox="0 0 12 11"><g fill="#fff"><rect x="0" y="0" width="1.6" height="11"/><rect x="0" y="9.4" width="12" height="1.6"/><rect x="3" y="2" width="1.7" height="8"/><rect x="6" y="4" width="1.7" height="6"/><rect x="9" y="6" width="1.7" height="4"/></g></svg>
<div class="t" style="left:671.50px;top:19px;font-size:10.41px;color:#fff;font-weight:400;font-family:'Liberation Sans';">Report</div>
<div class="abs" style="left:723.00px;top:10.25px;width:24.75px;height:25.35px;background:#f9f9f9;border:1px solid #ebebeb;border-radius:6px"></div>
<svg class="abs" style="left:730.00px;top:21.50px;" width="11" height="3" viewBox="0 0 11 3"><circle cx="1.4" cy="1.5" r="1.2" fill="#222"/><circle cx="5.5" cy="1.5" r="1.2" fill="#222"/><circle cx="9.6" cy="1.5" r="1.2" fill="#222"/></svg>
<svg class="abs" style="left:764.50px;top:18.50px;" width="9.5" height="9.5" viewBox="0 0 9.5 9.5"><path d="M0.8 0.8 L8.7 8.7 M8.7 0.8 L0.8 8.7" stroke="#333" stroke-width="1.3"/></svg>
<div class="t" style="left:20.60px;top:60px;font-size:14px;color:#2b3442;font-weight:700;font-family:'Liberation Sans';">Manual run</div>
<div class="t" style="left:20.60px;top:88px;font-size:10.2px;color:#6366f1;font-weight:400;font-family:'Liberation Sans';border-bottom:1px dotted #a5a8f5;padding-bottom:1px;line-height:1.05">Set labels</div>
<svg class="abs" style="left:111.40px;top:108.50px;" width="129" height="129" viewBox="0 0 129 129"><circle cx="64.5" cy="64.5" r="46.6" fill="none" stroke="#4cba78" stroke-width="34.2"/><line x1="64.5" y1="0" x2="64.5" y2="35" stroke="#fff" stroke-width="1.2"/></svg>
<div class="t" style="left:135.89999999999998px;width:80px;text-align:center;top:212.69px;font-size:8.4px;color:#fff;font-weight:700;text-shadow:0.5px 0.8px 1.5px rgba(0,0,0,0.7)">100.0%</div>
<div class="abs" style="left:339.80px;top:124.05px;width:8.40px;height:8.40px;background:#4cba78;border-radius:50%"></div>
<div class="t" style="left:350.50px;top:125px;font-size:8.4px;color:#444;font-weight:400;font-family:'Liberation Sans';">Passed</div>
<div class="abs" style="left:339.80px;top:140.40px;width:8.40px;height:8.40px;background:#e55f68;border-radius:50%"></div>
<div class="t" style="left:350.50px;top:141px;font-size:8.4px;color:#444;font-weight:400;font-family:'Liberation Sans';">Failed</div>
<div class="abs" style="left:339.80px;top:156.80px;width:8.40px;height:8.40px;background:#ecc848;border-radius:50%"></div>
<div class="t" style="left:350.50px;top:158px;font-size:8.4px;color:#444;font-weight:400;font-family:'Liberation Sans';">Skipped</div>
<div class="abs" style="left:339.80px;top:173.30px;width:8.40px;height:8.40px;background:#6b7080;border-radius:50%"></div>
<div class="t" style="left:350.50px;top:174px;font-size:8.4px;color:#444;font-weight:400;font-family:'Liberation Sans';">Pending</div>
<div class="abs" style="left:406.20px;top:114.00px;width:375.60px;height:28.00px;background:#f3f6fd"></div>
<div class="t" style="left:417.75px;top:121px;font-size:10.5px;color:#6b7280;font-weight:400;font-family:'Liberation Sans';">Status</div>
<div class="abs" style="left:539.80px;top:126.20px;width:7.00px;height:6.80px;background:#10b981;border-radius:50%"></div>
<div class="t" style="left:550.00px;top:125px;font-size:10px;color:#10b981;font-weight:700;font-family:'Liberation Sans';letter-spacing:-0.314px;">PASSED</div>
<div class="t" style="left:417.75px;top:149px;font-size:10.5px;color:#6b7280;font-weight:400;font-family:'Liberation Sans';">Duration</div>
<div class="t" style="left:539.20px;top:153px;font-size:10.2px;color:#1f2937;font-weight:400;font-family:'Liberation Sans';">5m 22s</div>
<div class="abs" style="left:406.20px;top:170.00px;width:375.60px;height:28.00px;background:#f3f6fd"></div>
<div class="t" style="left:417.75px;top:177px;font-size:10.5px;color:#6b7280;font-weight:400;font-family:'Liberation Sans';">Tests</div>
<div class="t" style="left:539.20px;top:181px;font-size:10.2px;color:#1f2937;font-weight:400;font-family:'Liberation Sans';">15</div>
<div class="t" style="left:417.75px;top:205px;font-size:10.5px;color:#6b7280;font-weight:400;font-family:'Liberation Sans';">Test Plan</div>
<div class="t" style="left:538.90px;top:209px;font-size:10.0px;color:#6366f1;font-weight:400;font-family:'Liberation Sans';border-bottom:1px dotted #a5a8f5;line-height:1.1">plan 123</div>
<div class="abs" style="left:406.20px;top:226.00px;width:375.60px;height:28.00px;background:#f3f6fd"></div>
<div class="t" style="left:417.75px;top:233px;font-size:10.5px;color:#6b7280;font-weight:400;font-family:'Liberation Sans';">Executed</div>
<div class="t" style="left:538.90px;top:237px;font-size:10px;color:#1f2937;font-weight:400;font-family:'Liberation Sans';letter-spacing:-0.043px;">Jul 15, 2025 5:11 PM</div>
<svg class="abs" style="left:635.80px;top:238.80px;" width="8.6" height="6" viewBox="0 0 8.6 6"><path d="M0.3 3 H7.2 M4.6 0.6 L7.4 3 L4.6 5.4" fill="none" stroke="#1f2937" stroke-width="1.1"/></svg>
<div class="t" style="left:647.80px;top:237px;font-size:10.01px;color:#1f2937;font-weight:400;font-family:'Liberation Sans';">Jul 15, 2025 5:15 PM</div>
<div class="t" style="left:417.75px;top:261px;font-size:10.5px;color:#6b7280;font-weight:400;font-family:'Liberation Sans';">Executed by</div>
<svg class="abs" style="left:541.70px;top:262.70px;" width="14" height="14" viewBox="0 0 24 24"><circle cx="12" cy="12" r="10.9" fill="#fff" stroke="#333" stroke-width="1.63"/><path d="M5.8 5.6 H14.7 V20.2 H11 V8.9 H5.8Z" fill="#161616"/><rect x="17.5" y="5.6" width="1.5" height="3.8" fill="#161616"/><rect x="14.7" y="5.4" width="1.9" height="7" fill="#6d9cf0"/></svg>
<div class="abs" style="left:560.50px;top:266.70px;width:4.50px;height:6.00px;background:#e9e9ea"></div>
<div class="abs" style="left:565.00px;top:266.70px;width:6.00px;height:6.00px;background:#8a8a8c"></div>
<div class="abs" style="left:571.00px;top:266.70px;width:6.00px;height:6.00px;background:#b0b0b2"></div>
<div class="abs" style="left:577.00px;top:266.70px;width:5.00px;height:6.00px;background:#e5e5e6"></div>
<div class="abs" style="left:582.00px;top:266.70px;width:5.00px;height:6.00px;background:#9a9a9c"></div>
<div class="abs" style="left:587.00px;top:266.70px;width:6.00px;height:6.00px;background:#c9c9cb"></div>
<div class="abs" style="left:593.00px;top:266.70px;width:6.00px;height:6.00px;background:#d5d5d6"></div>
<div class="abs" style="left:599.00px;top:266.70px;width:5.00px;height:6.00px;background:#a9a9ab"></div>
<div class="abs" style="left:604.00px;top:266.70px;width:6.00px;height:6.00px;background:#e6e6e7"></div>
<div class="abs" style="left:610.00px;top:266.70px;width:6.00px;height:6.00px;background:#8f8f91"></div>
<div class="abs" style="left:616.00px;top:266.70px;width:8.80px;height:6.00px;background:#a2a2a4"></div>
<div class="abs" style="left:406.20px;top:282.00px;width:375.60px;height:28.00px;background:#f3f6fd"></div>
<div class="t" style="left:417.75px;top:289px;font-size:10.5px;color:#6b7280;font-weight:400;font-family:'Liberation Sans';">Created by</div>
<svg class="abs" style="left:541.70px;top:290.70px;" width="14" height="14" viewBox="0 0 24 24"><circle cx="12" cy="12" r="10.9" fill="#fff" stroke="#333" stroke-width="1.63"/><path d="M5.8 5.6 H14.7 V20.2 H11 V8.9 H5.8Z" fill="#161616"/><rect x="17.5" y="5.6" width="1.5" height="3.8" fill="#161616"/><rect x="14.7" y="5.4" width="1.9" height="7" fill="#6d9cf0"/></svg>
<div class="abs" style="left:560.50px;top:294.70px;width:4.50px;height:6.00px;background:#ececed"></div>
<div class="abs" style="left:565.00px;top:294.70px;width:6.00px;height:6.00px;background:#747476"></div>
<div class="abs" style="left:571.00px;top:294.70px;width:6.00px;height:6.00px;background:#6e6e70"></div>
<div class="abs" style="left:577.00px;top:294.70px;width:5.00px;height:6.00px;background:#7a7a7c"></div>
<div class="abs" style="left:582.00px;top:294.70px;width:5.00px;height:6.00px;background:#88888a"></div>
<div class="abs" style="left:587.00px;top:294.70px;width:6.00px;height:6.00px;background:#c5c5c7"></div>
<div class="abs" style="left:593.00px;top:294.70px;width:6.00px;height:6.00px;background:#8c8c8e"></div>
<div class="abs" style="left:599.00px;top:294.70px;width:5.00px;height:6.00px;background:#99999b"></div>
<div class="abs" style="left:604.00px;top:294.70px;width:6.00px;height:6.00px;background:#7d7d7f"></div>
<div class="abs" style="left:610.00px;top:294.70px;width:6.00px;height:6.00px;background:#88888a"></div>
<div class="abs" style="left:616.00px;top:294.70px;width:8.80px;height:6.00px;background:#7b7b7d"></div>
<div class="t" style="left:628.60px;top:293px;font-size:10.35px;color:#1f2937;font-weight:400;font-family:'Liberation Sans';">, Jul 6, 2025 7:39 PM</div>
<div class="t" style="left:20.60px;top:331px;font-size:12.2px;color:#6366f1;font-weight:400;font-family:'Liberation Sans';">Tests</div>
<div class="t" style="left:66.30px;top:331px;font-size:12.4px;color:#6b7280;font-weight:400;font-family:'Liberation Sans';">Statistics</div>
<div class="t" style="left:133.50px;top:331px;font-size:12.1px;color:#6b7280;font-weight:400;font-family:'Liberation Sans';">Defects</div>
<div class="abs" style="left:20.00px;top:352.00px;width:762.00px;height:1.20px;background:#f0f1f4"></div>
<div class="abs" style="left:20.40px;top:351.20px;width:28.80px;height:2.20px;background:#6366f1;border-radius:1px"></div>
<div class="abs" style="left:20.25px;top:361.00px;width:83.55px;height:26.00px;background:#f9f9fa;border:1px solid #e8e9ec;border-radius:6px"></div>
<div class="t" style="left:32.00px;top:369px;font-size:10.3px;color:#3b3d42;font-weight:400;font-family:'Liberation Sans';">Passed</div>
<div class="abs" style="left:72.00px;top:366.60px;width:19.80px;height:14.00px;background:#d4f6e4;border-radius:4px"></div>
<div class="t" style="left:72px;width:19.799999999999955px;text-align:center;top:369px;font-size:9.8px;color:#047857">15</div>
<div class="abs" style="left:109.30px;top:361.00px;width:73.70px;height:26.00px;background:#f9f9fa;border:1px solid #e8e9ec;border-radius:6px"></div>
<div class="t" style="left:121.50px;top:369px;font-size:10.3px;color:#3b3d42;font-weight:400;font-family:'Liberation Sans';">Failed</div>
<div class="abs" style="left:155.00px;top:366.60px;width:16.80px;height:14.00px;background:#fde2e2;border-radius:4px"></div>
<div class="t" style="left:155px;width:16.799999999999955px;text-align:center;top:369px;font-size:9.8px;color:#b91c1c">0</div>
<div class="abs" style="left:189.20px;top:361.00px;width:83.55px;height:26.00px;background:#f9f9fa;border:1px solid #e8e9ec;border-radius:6px"></div>
<div class="t" style="left:200.90px;top:369px;font-size:10.3px;color:#3b3d42;font-weight:400;font-family:'Liberation Sans';">Skipped</div>
<div class="abs" style="left:244.60px;top:366.60px;width:16.30px;height:14.00px;background:#fdf1c4;border-radius:4px"></div>
<div class="t" style="left:244.60000000000002px;width:16.299999999999955px;text-align:center;top:369px;font-size:9.8px;color:#b45309">0</div>
<div class="abs" style="left:278.20px;top:361.00px;width:83.90px;height:26.00px;background:#f9f9fa;border:1px solid #e8e9ec;border-radius:6px"></div>
<div class="t" style="left:290.25px;top:369px;font-size:10.3px;color:#3b3d42;font-weight:400;font-family:'Liberation Sans';">Pending</div>
<div class="abs" style="left:334.00px;top:366.60px;width:16.00px;height:14.00px;background:#f2f2f3;border-radius:4px"></div>
<div class="t" style="left:334px;width:16px;text-align:center;top:369px;font-size:9.8px;color:#374151">0</div>
<div class="abs" style="left:371.20px;top:361.00px;width:153.80px;height:26.00px;background:#fff;border:1px solid #e6e7ea;border-radius:6px"></div>
<svg class="abs" style="left:381.00px;top:368.50px;" width="11" height="11" viewBox="0 0 11 11"><circle cx="4.5" cy="4.5" r="3.5" fill="none" stroke="#9ca3af" stroke-width="1.2"/><path d="M7 7 L10.3 10.3" stroke="#9ca3af" stroke-width="1.3"/></svg>
<div class="t" style="left:399px;width:108px;overflow:hidden;top:368.80px;font-size:10.4px;color:#8b93a0">Search by title/message</div>
<svg class="abs" style="left:535.70px;top:363.00px;" width="22" height="22" viewBox="0 0 24 24"><circle cx="12" cy="12" r="10.9" fill="#fff" stroke="#333" stroke-width="1.31"/><path d="M5.8 5.6 H14.7 V20.2 H11 V8.9 H5.8Z" fill="#161616"/><rect x="17.5" y="5.6" width="1.5" height="3.8" fill="#161616"/><rect x="14.7" y="5.4" width="1.9" height="7" fill="#6d9cf0"/></svg>
<div class="t" style="left:20.60px;top:398px;font-size:12px;color:#1f2937;font-weight:400;font-family:'Liberation Sans';">sort by: <span class="lk">suite</span> / <span class="lk">testcase</span> / <span class="lk">failure</span></div>
<div class="abs" style="left:666.30px;top:395.20px;width:92.30px;height:19.40px;background:#f9f9fa;border:1px solid #e8e9ec;border-radius:5px"></div>
<svg class="abs" style="left:672.00px;top:399.50px;" width="11.5" height="11" viewBox="0 0 11.5 11"><g fill="none" stroke="#333" stroke-width="1.1"><rect x="0.8" y="0.8" width="8.6" height="8" rx="1"/><path d="M0.8 3.6 H9.4 M4 3.6 V8.8"/></g><circle cx="9.4" cy="8.6" r="2.1" fill="#333"/><circle cx="9.4" cy="8.6" r="0.8" fill="#fff"/></svg>
<div class="t" style="left:689.20px;top:400px;font-size:10.6px;color:#3a3b3f;font-weight:400;font-family:'Liberation Sans';">Custom view</div>
<svg class="abs" style="left:766.50px;top:399.00px;" width="10.5" height="11" viewBox="0 0 10.5 11"><g fill="none" stroke="#9ca3af" stroke-width="1"><path d="M0.5 3.5 H10 M0.5 7.8 H10"/><circle cx="7.2" cy="3.5" r="1.6" fill="#fff"/><circle cx="3.2" cy="7.8" r="1.6" fill="#fff"/></g></svg>
<svg class="abs" style="left:20.95px;top:428.70px;" width="8.6" height="8.6" viewBox="0 0 8.6 8.6"><circle cx="4.3" cy="4.3" r="4.3" fill="#10b981"/><path d="M2.0 4.3999999999999995 L3.6999999999999997 6.0 L6.699999999999999 2.8" fill="none" stroke="#fff" stroke-width="1.3"/></svg>
<svg class="abs" style="left:37.00px;top:426.70px;" width="11" height="12" viewBox="0 0 11 12"><g fill="none" stroke="#6b7280" stroke-width="1.1"><rect x="0.75" y="1.9" width="9.5" height="9.5" rx="1.3"/><path d="M3.4 4.4 V9.8 M5.4 5.2 H8.4 M5.4 8.4 H8.4"/></g><rect x="3.4" y="0.5" width="4.2" height="2.5" rx="0.8" fill="#6b7280"/><circle cx="5.5" cy="1.6" r="0.55" fill="#fff"/></svg>
<div class="t" style="left:55.40px;top:428px;font-size:10.05px;color:#5f6673;font-weight:400;font-family:'Liberation Mono';">Shopping Cart @sm…</div>
<svg class="abs" style="left:178.40px;top:426.20px;" width="13.5" height="13.5" viewBox="0 0 14 14"><rect width="14" height="14" rx="3.2" fill="#fdf0c4"/><g fill="#c2570c"><circle cx="4.3" cy="3.9" r="0.85"/><circle cx="7.1" cy="3.1" r="0.85"/><circle cx="9.9" cy="3.9" r="0.85"/><circle cx="2.9" cy="6.7" r="0.85"/><circle cx="4.3" cy="9.4" r="0.85"/></g><path d="M7.2 7.1 L11.7 8.8 L10.1 9.6 L11.9 11.4 L11.2 12.1 L9.4 10.3 L8.7 11.9 Z" fill="#a8400c"/></svg>
<div class="t" style="left:195.25px;top:428px;font-size:11.9px;color:#1c1d22;font-weight:400;font-family:'Liberation Sans';">Add a single item to the shopping cart</div>
<svg class="abs" style="left:399.70px;top:426.40px;" width="14" height="14" viewBox="0 0 24 24"><circle cx="12" cy="12" r="10.9" fill="#fff" stroke="#333" stroke-width="1.80"/><path d="M5.8 5.6 H14.7 V20.2 H11 V8.9 H5.8Z" fill="#161616"/><rect x="17.5" y="5.6" width="1.5" height="3.8" fill="#161616"/><rect x="14.7" y="5.4" width="1.9" height="7" fill="#6d9cf0"/></svg>
<div class="abs" style="left:420.10px;top:427.70px;width:57.30px;height:12.10px;background:#e9ebef;border-radius:6px"></div>
<div class="t" style="left:425.90px;top:430px;font-size:8.59px;color:#6b7280;font-weight:400;font-family:'Liberation Sans';">@user_flow</div>
<svg class="abs" style="left:20.95px;top:451.12px;" width="8.6" height="8.6" viewBox="0 0 8.6 8.6"><circle cx="4.3" cy="4.3" r="4.3" fill="#10b981"/><path d="M2.0 4.3999999999999995 L3.6999999999999997 6.0 L6.699999999999999 2.8" fill="none" stroke="#fff" stroke-width="1.3"/></svg>
<svg class="abs" style="left:37.00px;top:449.12px;" width="11" height="12" viewBox="0 0 11 12"><g fill="none" stroke="#6b7280" stroke-width="1.1"><rect x="0.75" y="1.9" width="9.5" height="9.5" rx="1.3"/><path d="M3.4 4.4 V9.8 M5.4 5.2 H8.4 M5.4 8.4 H8.4"/></g><rect x="3.4" y="0.5" width="4.2" height="2.5" rx="0.8" fill="#6b7280"/><circle cx="5.5" cy="1.6" r="0.55" fill="#fff"/></svg>
<div class="t" style="left:55.40px;top:451px;font-size:10.05px;color:#5f6673;font-weight:400;font-family:'Liberation Mono';">Shopping Cart @sm…</div>
<svg class="abs" style="left:178.40px;top:448.62px;" width="13.5" height="13.5" viewBox="0 0 14 14"><rect width="14" height="14" rx="3.2" fill="#fdf0c4"/><g fill="#c2570c"><circle cx="4.3" cy="3.9" r="0.85"/><circle cx="7.1" cy="3.1" r="0.85"/><circle cx="9.9" cy="3.9" r="0.85"/><circle cx="2.9" cy="6.7" r="0.85"/><circle cx="4.3" cy="9.4" r="0.85"/></g><path d="M7.2 7.1 L11.7 8.8 L10.1 9.6 L11.9 11.4 L11.2 12.1 L9.4 10.3 L8.7 11.9 Z" fill="#a8400c"/></svg>
<div class="t" style="left:195.25px;top:451px;font-size:11.95px;color:#1c1d22;font-weight:400;font-family:'Liberation Sans';">Shopping with placeholder</div>
<svg class="abs" style="left:340.70px;top:448.82px;" width="14" height="14" viewBox="0 0 24 24"><circle cx="12" cy="12" r="10.9" fill="#fff" stroke="#333" stroke-width="1.80"/><path d="M5.8 5.6 H14.7 V20.2 H11 V8.9 H5.8Z" fill="#161616"/><rect x="17.5" y="5.6" width="1.5" height="3.8" fill="#161616"/><rect x="14.7" y="5.4" width="1.9" height="7" fill="#6d9cf0"/></svg>
<svg class="abs" style="left:20.95px;top:473.54px;" width="8.6" height="8.6" viewBox="0 0 8.6 8.6"><circle cx="4.3" cy="4.3" r="4.3" fill="#10b981"/><path d="M2.0 4.3999999999999995 L3.6999999999999997 6.0 L6.699999999999999 2.8" fill="none" stroke="#fff" stroke-width="1.3"/></svg>
<svg class="abs" style="left:37.00px;top:471.54px;" width="11" height="12" viewBox="0 0 11 12"><g fill="none" stroke="#6b7280" stroke-width="1.1"><rect x="0.75" y="1.9" width="9.5" height="9.5" rx="1.3"/><path d="M3.4 4.4 V9.8 M5.4 5.2 H8.4 M5.4 8.4 H8.4"/></g><rect x="3.4" y="0.5" width="4.2" height="2.5" rx="0.8" fill="#6b7280"/><circle cx="5.5" cy="1.6" r="0.55" fill="#fff"/></svg>
<div class="t" style="left:55.40px;top:473px;font-size:10.05px;color:#5f6673;font-weight:400;font-family:'Liberation Mono';">Shopping Cart @sm…</div>
<svg class="abs" style="left:178.40px;top:471.04px;" width="13.5" height="13.5" viewBox="0 0 14 14"><rect width="14" height="14" rx="3.2" fill="#fdf0c4"/><g fill="#c2570c"><circle cx="4.3" cy="3.9" r="0.85"/><circle cx="7.1" cy="3.1" r="0.85"/><circle cx="9.9" cy="3.9" r="0.85"/><circle cx="2.9" cy="6.7" r="0.85"/><circle cx="4.3" cy="9.4" r="0.85"/></g><path d="M7.2 7.1 L11.7 8.8 L10.1 9.6 L11.9 11.4 L11.2 12.1 L9.4 10.3 L8.7 11.9 Z" fill="#a8400c"/></svg>
<div class="t" style="left:195.25px;top:473px;font-size:11.95px;color:#1c1d22;font-weight:400;font-family:'Liberation Sans';">Shopping with placeholder</div>
<svg class="abs" style="left:340.70px;top:471.24px;" width="14" height="14" viewBox="0 0 24 24"><circle cx="12" cy="12" r="10.9" fill="#fff" stroke="#333" stroke-width="1.80"/><path d="M5.8 5.6 H14.7 V20.2 H11 V8.9 H5.8Z" fill="#161616"/><rect x="17.5" y="5.6" width="1.5" height="3.8" fill="#161616"/><rect x="14.7" y="5.4" width="1.9" height="7" fill="#6d9cf0"/></svg>
<svg class="abs" style="left:20.95px;top:495.96px;" width="8.6" height="8.6" viewBox="0 0 8.6 8.6"><circle cx="4.3" cy="4.3" r="4.3" fill="#10b981"/><path d="M2.0 4.3999999999999995 L3.6999999999999997 6.0 L6.699999999999999 2.8" fill="none" stroke="#fff" stroke-width="1.3"/></svg>
<svg class="abs" style="left:37.00px;top:493.96px;" width="11" height="12" viewBox="0 0 11 12"><g fill="none" stroke="#6b7280" stroke-width="1.1"><rect x="0.75" y="1.9" width="9.5" height="9.5" rx="1.3"/><path d="M3.4 4.4 V9.8 M5.4 5.2 H8.4 M5.4 8.4 H8.4"/></g><rect x="3.4" y="0.5" width="4.2" height="2.5" rx="0.8" fill="#6b7280"/><circle cx="5.5" cy="1.6" r="0.55" fill="#fff"/></svg>
<div class="t" style="left:55.40px;top:495px;font-size:10.05px;color:#5f6673;font-weight:400;font-family:'Liberation Mono';">Shopping Cart @sm…</div>
<svg class="abs" style="left:178.40px;top:493.46px;" width="13.5" height="13.5" viewBox="0 0 14 14"><rect width="14" height="14" rx="3.2" fill="#fdf0c4"/><g fill="#c2570c"><circle cx="4.3" cy="3.9" r="0.85"/><circle cx="7.1" cy="3.1" r="0.85"/><circle cx="9.9" cy="3.9" r="0.85"/><circle cx="2.9" cy="6.7" r="0.85"/><circle cx="4.3" cy="9.4" r="0.85"/></g><path d="M7.2 7.1 L11.7 8.8 L10.1 9.6 L11.9 11.4 L11.2 12.1 L9.4 10.3 L8.7 11.9 Z" fill="#a8400c"/></svg>
<div class="t" style="left:195.25px;top:495px;font-size:12.03px;color:#1c1d22;font-weight:400;font-family:'Liberation Sans';">Add multiple different items to the shopping cart</div>
<svg class="abs" style="left:454.40px;top:493.66px;" width="14" height="14" viewBox="0 0 24 24"><circle cx="12" cy="12" r="10.9" fill="#fff" stroke="#333" stroke-width="1.80"/><path d="M5.8 5.6 H14.7 V20.2 H11 V8.9 H5.8Z" fill="#161616"/><rect x="17.5" y="5.6" width="1.5" height="3.8" fill="#161616"/><rect x="14.7" y="5.4" width="1.9" height="7" fill="#6d9cf0"/></svg>
<div class="abs" style="left:474.80px;top:494.96px;width:57.30px;height:12.10px;background:#e9ebef;border-radius:6px"></div>
<div class="t" style="left:480.60px;top:497px;font-size:8.59px;color:#6b7280;font-weight:400;font-family:'Liberation Sans';">@user_flow</div>
<svg class="abs" style="left:20.95px;top:518.38px;" width="8.6" height="8.6" viewBox="0 0 8.6 8.6"><circle cx="4.3" cy="4.3" r="4.3" fill="#10b981"/><path d="M2.0 4.3999999999999995 L3.6999999999999997 6.0 L6.699999999999999 2.8" fill="none" stroke="#fff" stroke-width="1.3"/></svg>
<svg class="abs" style="left:37.00px;top:516.38px;" width="11" height="12" viewBox="0 0 11 12"><g fill="none" stroke="#6b7280" stroke-width="1.1"><rect x="0.75" y="1.9" width="9.5" height="9.5" rx="1.3"/><path d="M3.4 4.4 V9.8 M5.4 5.2 H8.4 M5.4 8.4 H8.4"/></g><rect x="3.4" y="0.5" width="4.2" height="2.5" rx="0.8" fill="#6b7280"/><circle cx="5.5" cy="1.6" r="0.55" fill="#fff"/></svg>
<div class="t" style="left:55.40px;top:518px;font-size:10.05px;color:#5f6673;font-weight:400;font-family:'Liberation Mono';">Shopping Cart @sm…</div>
<svg class="abs" style="left:178.40px;top:515.88px;" width="13.5" height="13.5" viewBox="0 0 14 14"><rect width="14" height="14" rx="3.2" fill="#fdf0c4"/><g fill="#c2570c"><circle cx="4.3" cy="3.9" r="0.85"/><circle cx="7.1" cy="3.1" r="0.85"/><circle cx="9.9" cy="3.9" r="0.85"/><circle cx="2.9" cy="6.7" r="0.85"/><circle cx="4.3" cy="9.4" r="0.85"/></g><path d="M7.2 7.1 L11.7 8.8 L10.1 9.6 L11.9 11.4 L11.2 12.1 L9.4 10.3 L8.7 11.9 Z" fill="#a8400c"/></svg>
<div class="t" style="left:195.25px;top:518px;font-size:11.85px;color:#1c1d22;font-weight:400;font-family:'Liberation Sans';">Remove an item from the shopping cart</div>
<svg class="abs" style="left:408.00px;top:516.08px;" width="14" height="14" viewBox="0 0 24 24"><circle cx="12" cy="12" r="10.9" fill="#fff" stroke="#333" stroke-width="1.80"/><path d="M5.8 5.6 H14.7 V20.2 H11 V8.9 H5.8Z" fill="#161616"/><rect x="17.5" y="5.6" width="1.5" height="3.8" fill="#161616"/><rect x="14.7" y="5.4" width="1.9" height="7" fill="#6d9cf0"/></svg>
<div class="abs" style="left:428.40px;top:517.38px;width:57.30px;height:12.10px;background:#e9ebef;border-radius:6px"></div>
<div class="t" style="left:434.20px;top:519px;font-size:8.59px;color:#6b7280;font-weight:400;font-family:'Liberation Sans';">@user_flow</div>
<svg class="abs" style="left:20.95px;top:540.80px;" width="8.6" height="8.6" viewBox="0 0 8.6 8.6"><circle cx="4.3" cy="4.3" r="4.3" fill="#10b981"/><path d="M2.0 4.3999999999999995 L3.6999999999999997 6.0 L6.699999999999999 2.8" fill="none" stroke="#fff" stroke-width="1.3"/></svg>
<svg class="abs" style="left:37.00px;top:538.80px;" width="11" height="12" viewBox="0 0 11 12"><g fill="none" stroke="#6b7280" stroke-width="1.1"><rect x="0.75" y="1.9" width="9.5" height="9.5" rx="1.3"/><path d="M3.4 4.4 V9.8 M5.4 5.2 H8.4 M5.4 8.4 H8.4"/></g><rect x="3.4" y="0.5" width="4.2" height="2.5" rx="0.8" fill="#6b7280"/><circle cx="5.5" cy="1.6" r="0.55" fill="#fff"/></svg>
<div class="t" style="left:55.40px;top:540px;font-size:10.05px;color:#5f6673;font-weight:400;font-family:'Liberation Mono';">Shopping Cart @sm…</div>
<svg class="abs" style="left:178.40px;top:538.30px;" width="13.5" height="13.5" viewBox="0 0 14 14"><rect width="14" height="14" rx="3.2" fill="#fdf0c4"/><g fill="#c2570c"><circle cx="4.3" cy="3.9" r="0.85"/><circle cx="7.1" cy="3.1" r="0.85"/><circle cx="9.9" cy="3.9" r="0.85"/><circle cx="2.9" cy="6.7" r="0.85"/><circle cx="4.3" cy="9.4" r="0.85"/></g><path d="M7.2 7.1 L11.7 8.8 L10.1 9.6 L11.9 11.4 L11.2 12.1 L9.4 10.3 L8.7 11.9 Z" fill="#a8400c"/></svg>
<div class="t" style="left:195.25px;top:539px;font-size:12.06px;color:#1c1d22;font-weight:400;font-family:'Liberation Sans';">Verify total price calculation with decimal prices</div>
<svg class="abs" style="left:452.00px;top:538.50px;" width="14" height="14" viewBox="0 0 24 24"><circle cx="12" cy="12" r="10.9" fill="#fff" stroke="#333" stroke-width="1.80"/><path d="M5.8 5.6 H14.7 V20.2 H11 V8.9 H5.8Z" fill="#161616"/><rect x="17.5" y="5.6" width="1.5" height="3.8" fill="#161616"/><rect x="14.7" y="5.4" width="1.9" height="7" fill="#6d9cf0"/></svg>
<svg class="abs" style="left:20.95px;top:563.22px;" width="8.6" height="8.6" viewBox="0 0 8.6 8.6"><circle cx="4.3" cy="4.3" r="4.3" fill="#10b981"/><path d="M2.0 4.3999999999999995 L3.6999999999999997 6.0 L6.699999999999999 2.8" fill="none" stroke="#fff" stroke-width="1.3"/></svg>
<svg class="abs" style="left:37.00px;top:561.22px;" width="11" height="12" viewBox="0 0 11 12"><g fill="none" stroke="#6b7280" stroke-width="1.1"><rect x="0.75" y="1.9" width="9.5" height="9.5" rx="1.3"/><path d="M3.4 4.4 V9.8 M5.4 5.2 H8.4 M5.4 8.4 H8.4"/></g><rect x="3.4" y="0.5" width="4.2" height="2.5" rx="0.8" fill="#6b7280"/><circle cx="5.5" cy="1.6" r="0.55" fill="#fff"/></svg>
<div class="t" style="left:55.40px;top:563px;font-size:10.05px;color:#5f6673;font-weight:400;font-family:'Liberation Mono';">Shopping Cart @sm…</div>
<svg class="abs" style="left:178.40px;top:560.72px;" width="13.5" height="13.5" viewBox="0 0 14 14"><rect width="14" height="14" rx="3.2" fill="#fdf0c4"/><g fill="#c2570c"><circle cx="4.3" cy="3.9" r="0.85"/><circle cx="7.1" cy="3.1" r="0.85"/><circle cx="9.9" cy="3.9" r="0.85"/><circle cx="2.9" cy="6.7" r="0.85"/><circle cx="4.3" cy="9.4" r="0.85"/></g><path d="M7.2 7.1 L11.7 8.8 L10.1 9.6 L11.9 11.4 L11.2 12.1 L9.4 10.3 L8.7 11.9 Z" fill="#a8400c"/></svg>
<div class="t" style="left:195.25px;top:563px;font-size:11.96px;color:#1c1d22;font-weight:400;font-family:'Liberation Sans';">Test the shopping cart with an item having a negative price</div>
<svg class="abs" style="left:511.00px;top:560.92px;" width="14" height="14" viewBox="0 0 24 24"><circle cx="12" cy="12" r="10.9" fill="#fff" stroke="#333" stroke-width="1.80"/><path d="M5.8 5.6 H14.7 V20.2 H11 V8.9 H5.8Z" fill="#161616"/><rect x="17.5" y="5.6" width="1.5" height="3.8" fill="#161616"/><rect x="14.7" y="5.4" width="1.9" height="7" fill="#6d9cf0"/></svg>
<svg class="abs" style="left:20.95px;top:585.64px;" width="8.6" height="8.6" viewBox="0 0 8.6 8.6"><circle cx="4.3" cy="4.3" r="4.3" fill="#10b981"/><path d="M2.0 4.3999999999999995 L3.6999999999999997 6.0 L6.699999999999999 2.8" fill="none" stroke="#fff" stroke-width="1.3"/></svg>
<svg class="abs" style="left:37.00px;top:583.64px;" width="11" height="12" viewBox="0 0 11 12"><g fill="none" stroke="#6b7280" stroke-width="1.1"><rect x="0.75" y="1.9" width="9.5" height="9.5" rx="1.3"/><path d="M3.4 4.4 V9.8 M5.4 5.2 H8.4 M5.4 8.4 H8.4"/></g><rect x="3.4" y="0.5" width="4.2" height="2.5" rx="0.8" fill="#6b7280"/><circle cx="5.5" cy="1.6" r="0.55" fill="#fff"/></svg>
<div class="t" style="left:55.40px;top:585px;font-size:10.05px;color:#5f6673;font-weight:400;font-family:'Liberation Mono';">Shopping Cart @sm…</div>
<svg class="abs" style="left:178.40px;top:583.14px;" width="13.5" height="13.5" viewBox="0 0 14 14"><rect width="14" height="14" rx="3.2" fill="#fdf0c4"/><g fill="#c2570c"><circle cx="4.3" cy="3.9" r="0.85"/><circle cx="7.1" cy="3.1" r="0.85"/><circle cx="9.9" cy="3.9" r="0.85"/><circle cx="2.9" cy="6.7" r="0.85"/><circle cx="4.3" cy="9.4" r="0.85"/></g><path d="M7.2 7.1 L11.7 8.8 L10.1 9.6 L11.9 11.4 L11.2 12.1 L9.4 10.3 L8.7 11.9 Z" fill="#a8400c"/></svg>
<div class="t" style="left:195.25px;top:584px;font-size:12.01px;color:#1c1d22;font-weight:400;font-family:'Liberation Sans';">Open the shopping cart from a product listing page directly</div>
<svg class="abs" style="left:511.70px;top:583.34px;" width="14" height="14" viewBox="0 0 24 24"><circle cx="12" cy="12" r="10.9" fill="#fff" stroke="#333" stroke-width="1.80"/><path d="M5.8 5.6 H14.7 V20.2 H11 V8.9 H5.8Z" fill="#161616"/><rect x="17.5" y="5.6" width="1.5" height="3.8" fill="#161616"/><rect x="14.7" y="5.4" width="1.9" height="7" fill="#6d9cf0"/></svg>
<svg class="abs" style="left:20.95px;top:608.06px;" width="8.6" height="8.6" viewBox="0 0 8.6 8.6"><circle cx="4.3" cy="4.3" r="4.3" fill="#10b981"/><path d="M2.0 4.3999999999999995 L3.6999999999999997 6.0 L6.699999999999999 2.8" fill="none" stroke="#fff" stroke-width="1.3"/></svg>
<svg class="abs" style="left:37.00px;top:606.06px;" width="11" height="12" viewBox="0 0 11 12"><g fill="none" stroke="#6b7280" stroke-width="1.1"><rect x="0.75" y="1.9" width="9.5" height="9.5" rx="1.3"/><path d="M3.4 4.4 V9.8 M5.4 5.2 H8.4 M5.4 8.4 H8.4"/></g><rect x="3.4" y="0.5" width="4.2" height="2.5" rx="0.8" fill="#6b7280"/><circle cx="5.5" cy="1.6" r="0.55" fill="#fff"/></svg>
<div class="t" style="left:55.40px;top:608px;font-size:10.05px;color:#5f6673;font-weight:400;font-family:'Liberation Mono';">Shopping Cart @sm…</div>
<svg class="abs" style="left:178.40px;top:605.56px;" width="13.5" height="13.5" viewBox="0 0 14 14"><rect width="14" height="14" rx="3.2" fill="#fdf0c4"/><g fill="#c2570c"><circle cx="4.3" cy="3.9" r="0.85"/><circle cx="7.1" cy="3.1" r="0.85"/><circle cx="9.9" cy="3.9" r="0.85"/><circle cx="2.9" cy="6.7" r="0.85"/><circle cx="4.3" cy="9.4" r="0.85"/></g><path d="M7.2 7.1 L11.7 8.8 L10.1 9.6 L11.9 11.4 L11.2 12.1 L9.4 10.3 L8.7 11.9 Z" fill="#a8400c"/></svg>
<div class="t" style="left:195.25px;top:608px;font-size:11.88px;color:#1c1d22;font-weight:400;font-family:'Liberation Sans';">Add an item to the cart after removing all other items</div>
<svg class="abs" style="left:476.60px;top:605.76px;" width="14" height="14" viewBox="0 0 24 24"><circle cx="12" cy="12" r="10.9" fill="#fff" stroke="#333" stroke-width="1.80"/><path d="M5.8 5.6 H14.7 V20.2 H11 V8.9 H5.8Z" fill="#161616"/><rect x="17.5" y="5.6" width="1.5" height="3.8" fill="#161616"/><rect x="14.7" y="5.4" width="1.9" height="7" fill="#6d9cf0"/></svg>
<svg class="abs" style="left:20.95px;top:630.48px;" width="8.6" height="8.6" viewBox="0 0 8.6 8.6"><circle cx="4.3" cy="4.3" r="4.3" fill="#10b981"/><path d="M2.0 4.3999999999999995 L3.6999999999999997 6.0 L6.699999999999999 2.8" fill="none" stroke="#fff" stroke-width="1.3"/></svg>
<svg class="abs" style="left:37.00px;top:628.48px;" width="11" height="12" viewBox="0 0 11 12"><g fill="none" stroke="#6b7280" stroke-width="1.1"><rect x="0.75" y="1.9" width="9.5" height="9.5" rx="1.3"/><path d="M3.4 4.4 V9.8 M5.4 5.2 H8.4 M5.4 8.4 H8.4"/></g><rect x="3.4" y="0.5" width="4.2" height="2.5" rx="0.8" fill="#6b7280"/><circle cx="5.5" cy="1.6" r="0.55" fill="#fff"/></svg>
<div class="t" style="left:55.40px;top:630px;font-size:10.05px;color:#5f6673;font-weight:400;font-family:'Liberation Mono';">Shopping Cart @sm…</div>
<svg class="abs" style="left:178.40px;top:627.98px;" width="13.5" height="13.5" viewBox="0 0 14 14"><rect width="14" height="14" rx="3.2" fill="#fdf0c4"/><g fill="#c2570c"><circle cx="4.3" cy="3.9" r="0.85"/><circle cx="7.1" cy="3.1" r="0.85"/><circle cx="9.9" cy="3.9" r="0.85"/><circle cx="2.9" cy="6.7" r="0.85"/><circle cx="4.3" cy="9.4" r="0.85"/></g><path d="M7.2 7.1 L11.7 8.8 L10.1 9.6 L11.9 11.4 L11.2 12.1 L9.4 10.3 L8.7 11.9 Z" fill="#a8400c"/></svg>
<div class="t" style="left:195.25px;top:630px;font-size:11.87px;color:#1c1d22;font-weight:400;font-family:'Liberation Sans';">Verify Cart Items Are Preserved After Browser Refresh</div>
<svg class="abs" style="left:486.10px;top:628.18px;" width="14" height="14" viewBox="0 0 24 24"><circle cx="12" cy="12" r="10.9" fill="#fff" stroke="#333" stroke-width="1.80"/><path d="M5.8 5.6 H14.7 V20.2 H11 V8.9 H5.8Z" fill="#161616"/><rect x="17.5" y="5.6" width="1.5" height="3.8" fill="#161616"/><rect x="14.7" y="5.4" width="1.9" height="7" fill="#6d9cf0"/></svg>
<svg class="abs" style="left:20.95px;top:652.90px;" width="8.6" height="8.6" viewBox="0 0 8.6 8.6"><circle cx="4.3" cy="4.3" r="4.3" fill="#10b981"/><path d="M2.0 4.3999999999999995 L3.6999999999999997 6.0 L6.699999999999999 2.8" fill="none" stroke="#fff" stroke-width="1.3"/></svg>
<svg class="abs" style="left:37.00px;top:650.90px;" width="11" height="12" viewBox="0 0 11 12"><g fill="none" stroke="#6b7280" stroke-width="1.1"><rect x="0.75" y="1.9" width="9.5" height="9.5" rx="1.3"/><path d="M3.4 4.4 V9.8 M5.4 5.2 H8.4 M5.4 8.4 H8.4"/></g><rect x="3.4" y="0.5" width="4.2" height="2.5" rx="0.8" fill="#6b7280"/><circle cx="5.5" cy="1.6" r="0.55" fill="#fff"/></svg>
<div class="t" style="left:55.40px;top:652px;font-size:10.05px;color:#5f6673;font-weight:400;font-family:'Liberation Mono';">Shopping Cart @sm…</div>
<svg class="abs" style="left:178.40px;top:650.40px;" width="13.5" height="13.5" viewBox="0 0 14 14"><rect width="14" height="14" rx="3.2" fill="#fdf0c4"/><g fill="#c2570c"><circle cx="4.3" cy="3.9" r="0.85"/><circle cx="7.1" cy="3.1" r="0.85"/><circle cx="9.9" cy="3.9" r="0.85"/><circle cx="2.9" cy="6.7" r="0.85"/><circle cx="4.3" cy="9.4" r="0.85"/></g><path d="M7.2 7.1 L11.7 8.8 L10.1 9.6 L11.9 11.4 L11.2 12.1 L9.4 10.3 L8.7 11.9 Z" fill="#a8400c"/></svg>
<div class="t" style="left:195.25px;top:653px;font-size:11.88px;color:#1c1d22;font-weight:400;font-family:'Liberation Sans';">Test Cart Functionality with Items Having Zero Quantity</div>
<svg class="abs" style="left:490.30px;top:650.60px;" width="14" height="14" viewBox="0 0 24 24"><circle cx="12" cy="12" r="10.9" fill="#fff" stroke="#333" stroke-width="1.80"/><path d="M5.8 5.6 H14.7 V20.2 H11 V8.9 H5.8Z" fill="#161616"/><rect x="17.5" y="5.6" width="1.5" height="3.8" fill="#161616"/><rect x="14.7" y="5.4" width="1.9" height="7" fill="#6d9cf0"/></svg>
<svg class="abs" style="left:20.95px;top:675.32px;" width="8.6" height="8.6" viewBox="0 0 8.6 8.6"><circle cx="4.3" cy="4.3" r="4.3" fill="#10b981"/><path d="M2.0 4.3999999999999995 L3.6999999999999997 6.0 L6.699999999999999 2.8" fill="none" stroke="#fff" stroke-width="1.3"/></svg>
<svg class="abs" style="left:37.00px;top:673.32px;" width="11" height="12" viewBox="0 0 11 12"><g fill="none" stroke="#6b7280" stroke-width="1.1"><rect x="0.75" y="1.9" width="9.5" height="9.5" rx="1.3"/><path d="M3.4 4.4 V9.8 M5.4 5.2 H8.4 M5.4 8.4 H8.4"/></g><rect x="3.4" y="0.5" width="4.2" height="2.5" rx="0.8" fill="#6b7280"/><circle cx="5.5" cy="1.6" r="0.55" fill="#fff"/></svg>
<div class="t" style="left:55.40px;top:675px;font-size:10.05px;color:#5f6673;font-weight:400;font-family:'Liberation Mono';">Shopping Cart @sm…</div>
<svg class="abs" style="left:178.40px;top:672.82px;" width="13.5" height="13.5" viewBox="0 0 14 14"><rect width="14" height="14" rx="3.2" fill="#fdf0c4"/><g fill="#c2570c"><circle cx="4.3" cy="3.9" r="0.85"/><circle cx="7.1" cy="3.1" r="0.85"/><circle cx="9.9" cy="3.9" r="0.85"/><circle cx="2.9" cy="6.7" r="0.85"/><circle cx="4.3" cy="9.4" r="0.85"/></g><path d="M7.2 7.1 L11.7 8.8 L10.1 9.6 L11.9 11.4 L11.2 12.1 L9.4 10.3 L8.7 11.9 Z" fill="#a8400c"/></svg>
<div class="t" style="left:195.25px;top:674px;font-size:11.71px;color:#1c1d22;font-weight:400;font-family:'Liberation Sans';">Edge Case: Removing Item with Same Quantity as Added</div>
<svg class="abs" style="left:500.60px;top:673.02px;" width="14" height="14" viewBox="0 0 24 24"><circle cx="12" cy="12" r="10.9" fill="#fff" stroke="#333" stroke-width="1.80"/><path d="M5.8 5.6 H14.7 V20.2 H11 V8.9 H5.8Z" fill="#161616"/><rect x="17.5" y="5.6" width="1.5" height="3.8" fill="#161616"/><rect x="14.7" y="5.4" width="1.9" height="7" fill="#6d9cf0"/></svg>
<svg class="abs" style="left:20.95px;top:697.74px;" width="8.6" height="8.6" viewBox="0 0 8.6 8.6"><circle cx="4.3" cy="4.3" r="4.3" fill="#10b981"/><path d="M2.0 4.3999999999999995 L3.6999999999999997 6.0 L6.699999999999999 2.8" fill="none" stroke="#fff" stroke-width="1.3"/></svg>
<svg class="abs" style="left:37.00px;top:695.74px;" width="11" height="12" viewBox="0 0 11 12"><g fill="none" stroke="#6b7280" stroke-width="1.1"><rect x="0.75" y="1.9" width="9.5" height="9.5" rx="1.3"/><path d="M3.4 4.4 V9.8 M5.4 5.2 H8.4 M5.4 8.4 H8.4"/></g><rect x="3.4" y="0.5" width="4.2" height="2.5" rx="0.8" fill="#6b7280"/><circle cx="5.5" cy="1.6" r="0.55" fill="#fff"/></svg>
<div class="t" style="left:55.40px;top:697px;font-size:10.05px;color:#5f6673;font-weight:400;font-family:'Liberation Mono';">Shopping Cart @sm…</div>
<svg class="abs" style="left:178.40px;top:695.24px;" width="13.5" height="13.5" viewBox="0 0 14 14"><rect width="14" height="14" rx="3.2" fill="#fdf0c4"/><g fill="#c2570c"><circle cx="4.3" cy="3.9" r="0.85"/><circle cx="7.1" cy="3.1" r="0.85"/><circle cx="9.9" cy="3.9" r="0.85"/><circle cx="2.9" cy="6.7" r="0.85"/><circle cx="4.3" cy="9.4" r="0.85"/></g><path d="M7.2 7.1 L11.7 8.8 L10.1 9.6 L11.9 11.4 L11.2 12.1 L9.4 10.3 L8.7 11.9 Z" fill="#a8400c"/></svg>
<div class="t" style="left:195.25px;top:696px;font-size:11.77px;color:#1c1d22;font-weight:400;font-family:'Liberation Sans';">Removing an Item from the Shopping Cart</div>
<svg class="abs" style="left:421.00px;top:695.44px;" width="14" height="14" viewBox="0 0 24 24"><circle cx="12" cy="12" r="10.9" fill="#fff" stroke="#333" stroke-width="1.80"/><path d="M5.8 5.6 H14.7 V20.2 H11 V8.9 H5.8Z" fill="#161616"/><rect x="17.5" y="5.6" width="1.5" height="3.8" fill="#161616"/><rect x="14.7" y="5.4" width="1.9" height="7" fill="#6d9cf0"/></svg>
<div class="abs" style="left:778.30px;top:420.40px;width:2.90px;height:246.60px;background:#c7d0fb;border-radius:2px"></div>
</div>
</div></body></html>
